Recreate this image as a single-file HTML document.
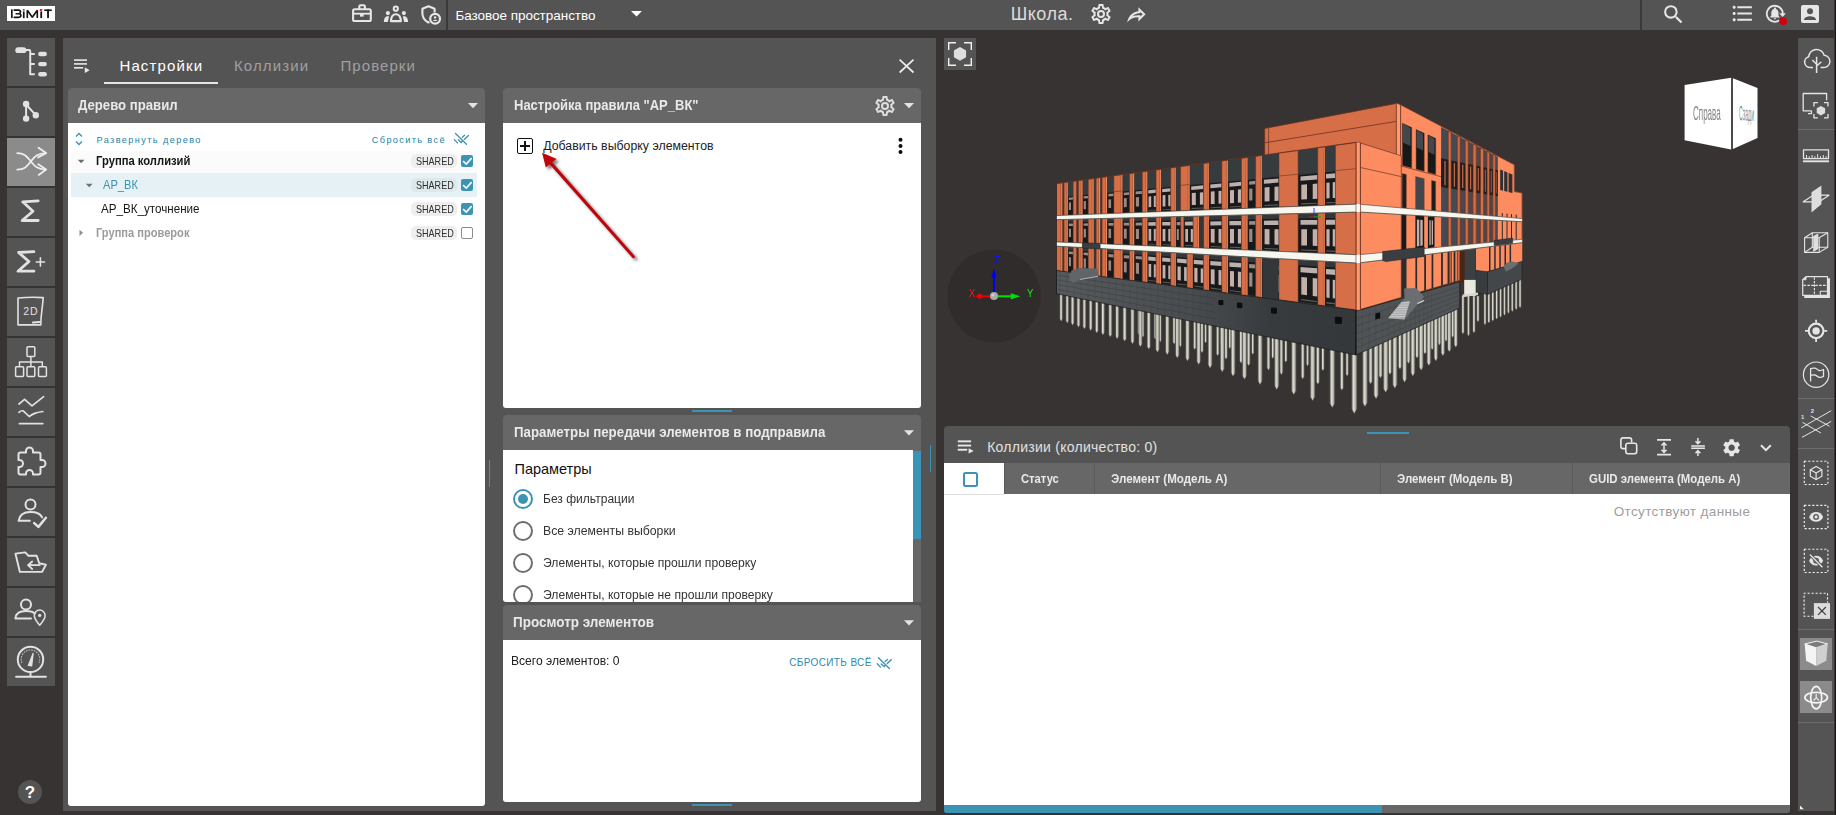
<!DOCTYPE html>
<html lang="ru">
<head>
<meta charset="utf-8">
<title>BIMIT</title>
<style>
*{box-sizing:border-box;margin:0;padding:0}
html,body{width:1836px;height:815px;overflow:hidden;background:#373332;font-family:"Liberation Sans",sans-serif;}
.a{position:absolute}
.t{position:absolute;white-space:nowrap;line-height:1}
svg{position:absolute;overflow:visible}
.sb{left:7px;width:48px;height:48px;background:#545454}
.sb.on{background:#8b8b8b}
.hd{background:#676767;border-radius:4px 4px 0 0}
.wh{background:#fff}
.teal{background:#3b94b4}
.badge{position:absolute;left:411px;width:46px;height:14px;border-radius:5px;background:#eeeeee}
.cb{position:absolute;left:461px;width:12px;height:12px;border-radius:2px;background:#3b94b4}
.rad{position:absolute;width:20px;height:20px;border-radius:50%;border:2px solid #6e6e6e;background:#fff}
</style>
</head>
<body>
<!-- TOP BAR -->
<div class="a" style="left:0;top:0;width:1834px;height:30px;background:#545454"></div>
<div class="a" style="left:7px;top:6px;width:48px;height:15px;background:#fff"></div>
<div class="a" style="left:446px;top:0;width:1.5px;height:30px;background:#3c3a39"></div>
<div class="a" style="left:1640px;top:0;width:1.5px;height:30px;background:#3c3a39"></div>
<!-- LEFT SIDEBAR -->
<div class="a sb" style="top:38px"></div>
<div class="a sb" style="top:88px"></div>
<div class="a sb on" style="top:138px"></div>
<div class="a sb" style="top:188px"></div>
<div class="a sb" style="top:238px"></div>
<div class="a sb" style="top:288px"></div>
<div class="a sb" style="top:338px"></div>
<div class="a sb" style="top:388px"></div>
<div class="a sb" style="top:438px"></div>
<div class="a sb" style="top:488px"></div>
<div class="a sb" style="top:538px"></div>
<div class="a sb" style="top:588px"></div>
<div class="a sb" style="top:638px"></div>
<div class="a" style="left:18px;top:780px;width:24px;height:24px;border-radius:50%;background:#545454"></div>
<!-- MAIN PANEL -->
<div class="a" style="left:63px;top:38px;width:873px;height:773px;background:#545454"></div>
<div class="a" style="left:104px;top:82px;width:114px;height:2px;background:#e6e6e6"></div>
<!-- tree panel -->
<div class="a hd" style="left:68px;top:88px;width:417px;height:35px"></div>
<div class="a wh" style="left:68px;top:123px;width:417px;height:683px;border-radius:0 0 3px 3px"></div>
<div class="a" style="left:71px;top:151px;width:406px;height:22px;background:#fbfbfb"></div>
<div class="a" style="left:71px;top:173px;width:406px;height:24px;background:#e6f1f5"></div>
<div class="badge" style="top:154px"></div>
<div class="badge" style="top:178px;background:#dde8ec"></div>
<div class="badge" style="top:202px"></div>
<div class="badge" style="top:226px"></div>
<div class="cb" style="top:155px"></div>
<div class="cb" style="top:179px"></div>
<div class="cb" style="top:203px"></div>
<div class="cb" style="top:227px;background:#fff;border:1.5px solid #8c8c8c"></div>
<!-- rule settings panel -->
<div class="a hd" style="left:503px;top:88px;width:418px;height:35px"></div>
<div class="a wh" style="left:503px;top:123px;width:418px;height:285px;border-radius:0 0 3px 3px"></div>
<div class="a teal" style="left:692px;top:410px;width:40px;height:2px"></div>
<div class="a" style="left:517px;top:138px;width:16px;height:16px;border:1.5px solid #111;border-radius:2px"></div>
<div class="a" style="left:520px;top:145.25px;width:10px;height:1.5px;background:#111"></div>
<div class="a" style="left:524.25px;top:141px;width:1.5px;height:10px;background:#111"></div>
<!-- params panel -->
<div class="a hd" style="left:503px;top:415px;width:418px;height:35px"></div>
<div class="a wh" style="left:503px;top:450px;width:418px;height:152px;border-radius:0 0 3px 3px"></div>
<div class="a" style="left:913px;top:450px;width:8px;height:152px;background:#676767"></div>
<div class="a teal" style="left:913px;top:451px;width:8px;height:88px"></div>
<div class="a teal" style="left:488.5px;top:460px;width:1.5px;height:27px"></div>
<div class="a teal" style="left:929.5px;top:445px;width:1.5px;height:27px"></div>
<div class="rad" style="left:513.3px;top:488.8px;border-color:#3b94b4"></div>
<div class="a" style="left:518.3px;top:493.8px;width:10px;height:10px;border-radius:50%;background:#3b94b4"></div>
<div class="rad" style="left:513.3px;top:520.7px"></div>
<div class="rad" style="left:513.3px;top:552.6px"></div>
<div class="rad" style="left:513.3px;top:584.5px"></div>
<div class="t" style="left:543.00px;top:589.00px;font-size:12.5px;color:#333333;transform:scaleX(0.9703);transform-origin:0 0">Элементы, которые не прошли проверку</div>
<div class="a" style="left:500px;top:602px;width:430px;height:3px;background:#545454"></div>
<!-- preview panel -->
<div class="a hd" style="left:503px;top:605px;width:418px;height:35px"></div>
<div class="a wh" style="left:503px;top:640px;width:418px;height:162px;border-radius:0 0 3px 3px"></div>
<div class="a teal" style="left:692px;top:804px;width:40px;height:2px"></div>
<!-- VIEWPORT button -->
<div class="a" style="left:944px;top:38px;width:32px;height:32px;background:#545454"></div>
<!-- BOTTOM PANEL -->
<div class="a" style="left:944px;top:426px;width:846px;height:387px;background:#545454;border-radius:4px 4px 3px 3px"></div>
<div class="a teal" style="left:1367px;top:432px;width:42px;height:2px"></div>
<div class="a" style="left:944px;top:463px;width:846px;height:31px;background:#676767"></div>
<div class="a wh" style="left:944px;top:463px;width:60px;height:31px"></div>
<div class="a" style="left:1004px;top:463px;width:1px;height:31px;background:#5a5a5a"></div>
<div class="a" style="left:1094px;top:463px;width:1px;height:31px;background:#5a5a5a"></div>
<div class="a" style="left:1380px;top:463px;width:1px;height:31px;background:#5a5a5a"></div>
<div class="a" style="left:1572px;top:463px;width:1px;height:31px;background:#5a5a5a"></div>
<div class="a wh" style="left:944px;top:494px;width:846px;height:311px"></div>
<div class="a" style="left:944px;top:494px;width:60px;height:1px;background:#e0e0e0"></div>
<div class="a" style="left:962.5px;top:471.5px;width:15px;height:15px;border:2px solid #3b94b4;border-radius:2.5px;background:#fff"></div>
<div class="a" style="left:944px;top:805px;width:846px;height:8px;background:#676767;border-radius:0 0 3px 3px"></div>
<div class="a teal" style="left:944px;top:805px;width:438px;height:8px;border-radius:0 0 0 3px"></div>
<!-- RIGHT TOOLBAR -->
<div class="a" style="left:1834.500px;top:0;width:1.500px;height:815px;background:#1a1817"></div>
<div class="a" style="left:1798px;top:38px;width:36px;height:773px;background:#545454"></div>
<div class="a" style="left:1798px;top:129px;width:36px;height:1px;background:#6e6e6e"></div>
<div class="a" style="left:1798px;top:398px;width:36px;height:1px;background:#6e6e6e"></div>
<div class="a" style="left:1798px;top:448px;width:36px;height:1px;background:#6e6e6e"></div>
<div class="a" style="left:1798px;top:629px;width:36px;height:1px;background:#6e6e6e"></div>
<div class="a" style="left:1798px;top:722px;width:36px;height:1px;background:#6e6e6e"></div>
<div class="a" style="left:1800px;top:638px;width:32px;height:32px;background:#8b8b8b"></div>
<div class="a" style="left:1800px;top:681px;width:32px;height:32px;background:#8b8b8b"></div>

<!-- TEXT -->
<div class="t" style="left:455.40px;top:9.00px;font-size:13.5px;color:#ffffff;letter-spacing:-0.033px">Базовое пространство</div>
<div class="t" style="left:1010.80px;top:5.00px;font-size:18px;color:#dcdcdc;letter-spacing:0.479px">Школа.</div>
<div class="t" style="left:119.40px;top:58.00px;font-size:15px;color:#ffffff;letter-spacing:1.154px">Настройки</div>
<div class="t" style="left:233.90px;top:58.00px;font-size:15px;color:#a0a0a0;letter-spacing:1.130px">Коллизии</div>
<div class="t" style="left:340.50px;top:58.00px;font-size:15px;color:#a0a0a0;letter-spacing:1.070px">Проверки</div>
<div class="t" style="left:78.20px;top:98.00px;font-size:14.3px;color:#e9e9e9;transform:scaleX(0.9196);transform-origin:0 0;font-weight:bold">Дерево правил</div>
<div class="t" style="left:96.50px;top:136.00px;font-size:9.2px;color:#2482a5;letter-spacing:1.380px">Развернуть дерево</div>
<div class="t" style="left:371.80px;top:136.00px;font-size:9.2px;color:#2482a5;letter-spacing:1.349px">Сбросить всё</div>
<div class="t" style="left:95.50px;top:155.00px;font-size:12.3px;color:#151515;transform:scaleX(0.9130);transform-origin:0 0;font-weight:bold">Группа коллизий</div>
<div class="t" style="left:103.30px;top:179.00px;font-size:12.3px;color:#3b94b4;transform:scaleX(0.9025);transform-origin:0 0">АР_ВК</div>
<div class="t" style="left:101.30px;top:203.00px;font-size:12.3px;color:#151515;transform:scaleX(0.9458);transform-origin:0 0">АР_ВК_уточнение</div>
<div class="t" style="left:95.50px;top:227.00px;font-size:12.3px;color:#9b9b9b;transform:scaleX(0.9013);transform-origin:0 0;font-weight:bold">Группа проверок</div>
<div class="t" style="left:513.50px;top:98.00px;font-size:14.3px;color:#e9e9e9;transform:scaleX(0.9094);transform-origin:0 0;font-weight:bold">Настройка правила &quot;АР_ВК&quot;</div>
<div class="t" style="left:543.20px;top:140.00px;font-size:12.3px;color:#222222;letter-spacing:0.017px">Добавить выборку элементов</div>
<div class="t" style="left:513.50px;top:425.00px;font-size:14.3px;color:#e9e9e9;transform:scaleX(0.9299);transform-origin:0 0;font-weight:bold">Параметры передачи элементов в подправила</div>
<div class="t" style="left:514.50px;top:462.00px;font-size:14.5px;color:#111111;letter-spacing:-0.009px">Параметры</div>
<div class="t" style="left:542.74px;top:493.00px;font-size:12.5px;color:#333333;transform:scaleX(0.9633);transform-origin:0 0">Без фильтрации</div>
<div class="t" style="left:542.72px;top:525.00px;font-size:12.5px;color:#333333;transform:scaleX(0.9817);transform-origin:0 0">Все элементы выборки</div>
<div class="t" style="left:543.00px;top:557.00px;font-size:12.5px;color:#333333;transform:scaleX(0.9717);transform-origin:0 0">Элементы, которые прошли проверку</div>
<div class="t" style="left:513.30px;top:615.00px;font-size:14.3px;color:#e9e9e9;transform:scaleX(0.9427);transform-origin:0 0;font-weight:bold">Просмотр элементов</div>
<div class="t" style="left:510.72px;top:655.00px;font-size:12.3px;color:#222222;transform:scaleX(0.9839);transform-origin:0 0">Всего элементов: 0</div>
<div class="t" style="left:789.20px;top:658.00px;font-size:10px;color:#2f8aab;letter-spacing:0.370px">СБРОСИТЬ ВСЁ</div>
<div class="t" style="left:987.20px;top:440.00px;font-size:14px;color:#e0e0e0;letter-spacing:0.266px">Коллизии (количество: 0)</div>
<div class="t" style="left:1021.10px;top:473.00px;font-size:12.3px;color:#e9e9e9;transform:scaleX(0.9134);transform-origin:0 0;font-weight:bold">Статус</div>
<div class="t" style="left:1110.50px;top:473.00px;font-size:12.3px;color:#e9e9e9;transform:scaleX(0.9412);transform-origin:0 0;font-weight:bold">Элемент (Модель A)</div>
<div class="t" style="left:1396.60px;top:473.00px;font-size:12.3px;color:#e9e9e9;transform:scaleX(0.9347);transform-origin:0 0;font-weight:bold">Элемент (Модель B)</div>
<div class="t" style="left:1588.80px;top:473.00px;font-size:12.3px;color:#e9e9e9;transform:scaleX(0.9298);transform-origin:0 0;font-weight:bold">GUID элемента (Модель A)</div>
<div class="t" style="left:1613.70px;top:505.00px;font-size:13.5px;color:#9e9e9e;letter-spacing:0.372px">Отсутствуют данные</div>
<div class="t" style="left:415.70px;top:157.00px;font-size:10.4px;color:#2e2e2e;transform:scaleX(0.8715);transform-origin:0 0">SHARED</div>
<div class="t" style="left:415.70px;top:181.00px;font-size:10.4px;color:#2e2e2e;transform:scaleX(0.8715);transform-origin:0 0">SHARED</div>
<div class="t" style="left:415.70px;top:205.00px;font-size:10.4px;color:#2e2e2e;transform:scaleX(0.8715);transform-origin:0 0">SHARED</div>
<div class="t" style="left:415.70px;top:229.00px;font-size:10.4px;color:#2e2e2e;transform:scaleX(0.8715);transform-origin:0 0">SHARED</div>
<!-- BUILDING -->
<svg width="1836" height="815" viewBox="0 0 1836 815" style="left:0;top:0"><defs><linearGradient id="pg" x1="0" x2="1" y1="0" y2="0"><stop offset="0" stop-color="#6d6d66"/><stop offset="0.35" stop-color="#dcdcd2"/><stop offset="0.7" stop-color="#b9b9af"/><stop offset="1" stop-color="#62625c"/></linearGradient></defs>
<path d="M1204.4,322.0V341.2L1205.6,343.0L1206.8,341.2V322.0Z" fill="url(#pg)" stroke="#4e4e49" stroke-width="0.35"/>
<path d="M1220.1,325.2V343.8L1221.3,345.7L1222.5,343.8V325.2Z" fill="url(#pg)" stroke="#4e4e49" stroke-width="0.35"/>
<path d="M1228.7,327.0V346.8L1229.9,348.7L1231.1,346.8V327.0Z" fill="url(#pg)" stroke="#4e4e49" stroke-width="0.35"/>
<path d="M1243.8,330.0V350.3L1245.0,352.3L1246.3,350.3V330.0Z" fill="url(#pg)" stroke="#4e4e49" stroke-width="0.35"/>
<path d="M1251.5,331.6V352.4L1252.8,354.4L1254.0,352.4V331.6Z" fill="url(#pg)" stroke="#4e4e49" stroke-width="0.35"/>
<path d="M1271.5,335.7V356.5L1272.8,358.5L1274.1,356.5V335.7Z" fill="url(#pg)" stroke="#4e4e49" stroke-width="0.35"/>
<path d="M1284.6,338.4V360.2L1285.9,362.3L1287.2,360.2V338.4Z" fill="url(#pg)" stroke="#4e4e49" stroke-width="0.35"/>
<path d="M1306.2,342.7V363.9L1307.5,366.1L1308.9,363.9V342.7Z" fill="url(#pg)" stroke="#4e4e49" stroke-width="0.35"/>
<path d="M1321.5,345.9V368.6L1322.9,370.8L1324.3,368.6V345.9Z" fill="url(#pg)" stroke="#4e4e49" stroke-width="0.35"/>
<path d="M1345.8,350.8V373.9L1347.2,376.1L1348.6,373.9V350.8Z" fill="url(#pg)" stroke="#4e4e49" stroke-width="0.35"/>
<path d="M1137.5,308.5V332.8L1138.8,334.8L1140.1,332.8V308.5Z" fill="url(#pg)" stroke="#4e4e49" stroke-width="0.35"/>
<path d="M1141.5,309.3V335.3L1142.8,337.4L1144.1,335.3V309.3Z" fill="url(#pg)" stroke="#4e4e49" stroke-width="0.35"/>
<path d="M1154.0,311.8V337.4L1155.3,339.5L1156.7,337.4V311.8Z" fill="url(#pg)" stroke="#4e4e49" stroke-width="0.35"/>
<path d="M1158.9,312.8V340.1L1160.2,342.2L1161.5,340.1V312.8Z" fill="url(#pg)" stroke="#4e4e49" stroke-width="0.35"/>
<path d="M1172.8,315.6V342.1L1174.2,344.2L1175.5,342.1V315.6Z" fill="url(#pg)" stroke="#4e4e49" stroke-width="0.35"/>
<path d="M1178.9,316.9V344.9L1180.3,347.1L1181.7,344.9V316.9Z" fill="url(#pg)" stroke="#4e4e49" stroke-width="0.35"/>
<path d="M1193.3,319.8V347.4L1194.7,349.6L1196.1,347.4V319.8Z" fill="url(#pg)" stroke="#4e4e49" stroke-width="0.35"/>
<path d="M1200.6,321.3V350.5L1202.1,352.8L1203.5,350.5V321.3Z" fill="url(#pg)" stroke="#4e4e49" stroke-width="0.35"/>
<path d="M1216.2,324.5V353.5L1217.7,355.8L1219.1,353.5V324.5Z" fill="url(#pg)" stroke="#4e4e49" stroke-width="0.35"/>
<path d="M1224.6,326.2V356.9L1226.1,359.2L1227.6,356.9V326.2Z" fill="url(#pg)" stroke="#4e4e49" stroke-width="0.35"/>
<path d="M1239.5,329.2V360.8L1241.1,363.2L1242.6,360.8V329.2Z" fill="url(#pg)" stroke="#4e4e49" stroke-width="0.35"/>
<path d="M1247.1,330.8V363.2L1248.6,365.7L1250.2,363.2V330.8Z" fill="url(#pg)" stroke="#4e4e49" stroke-width="0.35"/>
<path d="M1266.9,334.8V367.8L1268.5,370.3L1270.1,367.8V334.8Z" fill="url(#pg)" stroke="#4e4e49" stroke-width="0.35"/>
<path d="M1279.8,337.4V372.1L1281.4,374.7L1283.0,372.1V337.4Z" fill="url(#pg)" stroke="#4e4e49" stroke-width="0.35"/>
<path d="M1301.1,341.8V376.4L1302.8,379.0L1304.4,376.4V341.8Z" fill="url(#pg)" stroke="#4e4e49" stroke-width="0.35"/>
<path d="M1316.2,344.8V381.6L1317.9,384.3L1319.6,381.6V344.8Z" fill="url(#pg)" stroke="#4e4e49" stroke-width="0.35"/>
<path d="M1340.2,349.7V387.6L1341.9,390.3L1343.6,387.6V349.7Z" fill="url(#pg)" stroke="#4e4e49" stroke-width="0.35"/>
<path d="M1059.7,292.7V318.9L1061.2,321.3L1062.7,318.9V292.7Z" fill="url(#pg)" stroke="#4e4e49" stroke-width="0.35"/>
<path d="M1065.8,293.9V320.7L1067.3,323.2L1068.8,320.7V293.9Z" fill="url(#pg)" stroke="#4e4e49" stroke-width="0.35"/>
<path d="M1071.0,295.0V322.7L1072.6,325.2L1074.2,322.7V295.0Z" fill="url(#pg)" stroke="#4e4e49" stroke-width="0.35"/>
<path d="M1076.9,296.2V324.7L1078.5,327.2L1080.1,324.7V296.2Z" fill="url(#pg)" stroke="#4e4e49" stroke-width="0.35"/>
<path d="M1082.8,297.4V326.5L1084.4,329.1L1086.0,326.5V297.4Z" fill="url(#pg)" stroke="#4e4e49" stroke-width="0.35"/>
<path d="M1089.1,298.7V328.1L1090.7,330.7L1092.3,328.1V298.7Z" fill="url(#pg)" stroke="#4e4e49" stroke-width="0.35"/>
<path d="M1095.2,299.9V330.4L1096.8,333.0L1098.4,330.4V299.9Z" fill="url(#pg)" stroke="#4e4e49" stroke-width="0.35"/>
<path d="M1101.3,301.2V332.3L1103.0,335.0L1104.7,332.3V301.2Z" fill="url(#pg)" stroke="#4e4e49" stroke-width="0.35"/>
<path d="M1108.6,302.7V334.3L1110.3,337.0L1112.0,334.3V302.7Z" fill="url(#pg)" stroke="#4e4e49" stroke-width="0.35"/>
<path d="M1115.5,304.1V336.1L1117.2,338.9L1118.9,336.1V304.1Z" fill="url(#pg)" stroke="#4e4e49" stroke-width="0.35"/>
<path d="M1122.9,305.6V338.5L1124.7,341.3L1126.5,338.5V305.6Z" fill="url(#pg)" stroke="#4e4e49" stroke-width="0.35"/>
<path d="M1130.7,307.2V341.1L1132.5,343.9L1134.3,341.1V307.2Z" fill="url(#pg)" stroke="#4e4e49" stroke-width="0.35"/>
<path d="M1138.6,308.8V343.9L1140.4,346.8L1142.2,343.9V308.8Z" fill="url(#pg)" stroke="#4e4e49" stroke-width="0.35"/>
<path d="M1147.0,310.5V346.3L1148.8,349.2L1150.6,346.3V310.5Z" fill="url(#pg)" stroke="#4e4e49" stroke-width="0.35"/>
<path d="M1155.6,312.3V349.3L1157.5,352.3L1159.4,349.3V312.3Z" fill="url(#pg)" stroke="#4e4e49" stroke-width="0.35"/>
<path d="M1165.4,314.2V351.6L1167.3,354.7L1169.2,351.6V314.2Z" fill="url(#pg)" stroke="#4e4e49" stroke-width="0.35"/>
<path d="M1175.4,316.3V354.9L1177.3,358.0L1179.2,354.9V316.3Z" fill="url(#pg)" stroke="#4e4e49" stroke-width="0.35"/>
<path d="M1185.5,318.4V357.7L1187.5,360.9L1189.5,357.7V318.4Z" fill="url(#pg)" stroke="#4e4e49" stroke-width="0.35"/>
<path d="M1196.7,320.6V361.3L1198.7,364.5L1200.7,361.3V320.6Z" fill="url(#pg)" stroke="#4e4e49" stroke-width="0.35"/>
<path d="M1208.0,322.9V364.7L1210.1,368.0L1212.2,364.7V322.9Z" fill="url(#pg)" stroke="#4e4e49" stroke-width="0.35"/>
<path d="M1220.2,325.4V368.5L1222.3,371.9L1224.4,368.5V325.4Z" fill="url(#pg)" stroke="#4e4e49" stroke-width="0.35"/>
<path d="M1231.0,327.6V372.9L1233.1,376.3L1235.2,372.9V327.6Z" fill="url(#pg)" stroke="#4e4e49" stroke-width="0.35"/>
<path d="M1242.3,329.9V375.7L1244.5,379.2L1246.7,375.7V329.9Z" fill="url(#pg)" stroke="#4e4e49" stroke-width="0.35"/>
<path d="M1257.9,333.1V380.9L1260.1,384.5L1262.3,380.9V333.1Z" fill="url(#pg)" stroke="#4e4e49" stroke-width="0.35"/>
<path d="M1274.4,336.5V385.8L1276.7,389.5L1279.0,385.8V336.5Z" fill="url(#pg)" stroke="#4e4e49" stroke-width="0.35"/>
<path d="M1291.4,340.0V390.7L1293.8,394.5L1296.2,390.7V340.0Z" fill="url(#pg)" stroke="#4e4e49" stroke-width="0.35"/>
<path d="M1310.2,343.8V396.7L1312.6,400.6L1315.0,396.7V343.8Z" fill="url(#pg)" stroke="#4e4e49" stroke-width="0.35"/>
<path d="M1329.8,347.8V403.4L1332.3,407.4L1334.8,403.4V347.8Z" fill="url(#pg)" stroke="#4e4e49" stroke-width="0.35"/>
<path d="M1368.8,347.2V381.0L1370.6,383.9L1372.5,381.0V347.2Z" fill="url(#pg)" stroke="#4e4e49" stroke-width="0.35"/>
<path d="M1378.8,342.7V375.3L1380.5,378.1L1382.3,375.3V342.7Z" fill="url(#pg)" stroke="#4e4e49" stroke-width="0.35"/>
<path d="M1388.3,338.4V371.8L1390.0,374.6L1391.7,371.8V338.4Z" fill="url(#pg)" stroke="#4e4e49" stroke-width="0.35"/>
<path d="M1398.3,333.8V366.5L1400.0,369.2L1401.7,366.5V333.8Z" fill="url(#pg)" stroke="#4e4e49" stroke-width="0.35"/>
<path d="M1406.9,329.9V361.0L1408.5,363.6L1410.2,361.0V329.9Z" fill="url(#pg)" stroke="#4e4e49" stroke-width="0.35"/>
<path d="M1415.5,326.0V355.7L1417.1,358.2L1418.7,355.7V326.0Z" fill="url(#pg)" stroke="#4e4e49" stroke-width="0.35"/>
<path d="M1423.5,322.4V351.7L1425.0,354.1L1426.6,351.7V322.4Z" fill="url(#pg)" stroke="#4e4e49" stroke-width="0.35"/>
<path d="M1430.7,319.1V347.6L1432.2,350.0L1433.7,347.6V319.1Z" fill="url(#pg)" stroke="#4e4e49" stroke-width="0.35"/>
<path d="M1438.0,315.8V342.9L1439.4,345.2L1440.9,342.9V315.8Z" fill="url(#pg)" stroke="#4e4e49" stroke-width="0.35"/>
<path d="M1444.6,312.8V339.3L1446.0,341.6L1447.5,339.3V312.8Z" fill="url(#pg)" stroke="#4e4e49" stroke-width="0.35"/>
<path d="M1451.3,309.8V335.2L1452.7,337.5L1454.1,335.2V309.8Z" fill="url(#pg)" stroke="#4e4e49" stroke-width="0.35"/>
<path d="M1362.5,349.8V402.5L1365.0,406.6L1367.5,402.5V349.8Z" fill="url(#pg)" stroke="#4e4e49" stroke-width="0.35"/>
<path d="M1373.7,344.7V394.8L1376.1,398.7L1378.5,394.8V344.7Z" fill="url(#pg)" stroke="#4e4e49" stroke-width="0.35"/>
<path d="M1383.3,340.4V388.5L1385.7,392.3L1388.1,388.5V340.4Z" fill="url(#pg)" stroke="#4e4e49" stroke-width="0.35"/>
<path d="M1392.6,336.2V384.5L1394.9,388.2L1397.2,384.5V336.2Z" fill="url(#pg)" stroke="#4e4e49" stroke-width="0.35"/>
<path d="M1402.4,331.7V378.7L1404.6,382.2L1406.8,378.7V331.7Z" fill="url(#pg)" stroke="#4e4e49" stroke-width="0.35"/>
<path d="M1410.8,327.9V372.7L1412.9,376.1L1415.0,372.7V327.9Z" fill="url(#pg)" stroke="#4e4e49" stroke-width="0.35"/>
<path d="M1419.1,324.2V366.9L1421.2,370.2L1423.3,366.9V324.2Z" fill="url(#pg)" stroke="#4e4e49" stroke-width="0.35"/>
<path d="M1426.9,320.6V362.4L1428.9,365.6L1430.9,362.4V320.6Z" fill="url(#pg)" stroke="#4e4e49" stroke-width="0.35"/>
<path d="M1434.0,317.5V357.9L1435.9,361.0L1437.8,357.9V317.5Z" fill="url(#pg)" stroke="#4e4e49" stroke-width="0.35"/>
<path d="M1441.0,314.3V352.8L1442.9,355.8L1444.8,352.8V314.3Z" fill="url(#pg)" stroke="#4e4e49" stroke-width="0.35"/>
<path d="M1447.5,311.3V348.9L1449.3,351.8L1451.1,348.9V311.3Z" fill="url(#pg)" stroke="#4e4e49" stroke-width="0.35"/>
<path d="M1454.0,308.4V344.4L1455.8,347.2L1457.6,344.4V308.4Z" fill="url(#pg)" stroke="#4e4e49" stroke-width="0.35"/>
<path d="M1461.7,296.0V331.9L1463.0,334.0L1464.3,331.9V296.0Z" fill="url(#pg)" stroke="#4e4e49" stroke-width="0.35"/>
<path d="M1467.2,296.0V333.9L1468.5,336.0L1469.8,333.9V296.0Z" fill="url(#pg)" stroke="#4e4e49" stroke-width="0.35"/>
<path d="M1472.7,296.0V330.9L1474.0,333.0L1475.3,330.9V296.0Z" fill="url(#pg)" stroke="#4e4e49" stroke-width="0.35"/>
<path d="M1476.7,296.0V319.9L1478.0,322.0L1479.3,319.9V296.0Z" fill="url(#pg)" stroke="#4e4e49" stroke-width="0.35"/>
<path d="M1483.8,286.7V323.1L1485.0,325.0L1486.2,323.1V286.7Z" fill="url(#pg)" stroke="#4e4e49" stroke-width="0.35"/>
<path d="M1487.7,285.1V321.2L1488.9,323.1L1490.1,321.2V285.1Z" fill="url(#pg)" stroke="#4e4e49" stroke-width="0.35"/>
<path d="M1491.6,283.6V319.3L1492.8,321.2L1494.0,319.3V283.6Z" fill="url(#pg)" stroke="#4e4e49" stroke-width="0.35"/>
<path d="M1495.5,282.0V317.4L1496.7,319.3L1497.9,317.4V282.0Z" fill="url(#pg)" stroke="#4e4e49" stroke-width="0.35"/>
<path d="M1499.4,280.4V315.5L1500.6,317.4L1501.8,315.5V280.4Z" fill="url(#pg)" stroke="#4e4e49" stroke-width="0.35"/>
<path d="M1503.3,278.8V313.6L1504.5,315.5L1505.7,313.6V278.8Z" fill="url(#pg)" stroke="#4e4e49" stroke-width="0.35"/>
<path d="M1507.2,277.2V311.7L1508.4,313.6L1509.6,311.7V277.2Z" fill="url(#pg)" stroke="#4e4e49" stroke-width="0.35"/>
<path d="M1511.1,275.6V309.8L1512.3,311.7L1513.5,309.8V275.6Z" fill="url(#pg)" stroke="#4e4e49" stroke-width="0.35"/>
<path d="M1515.0,274.0V307.9L1516.2,309.8L1517.4,307.9V274.0Z" fill="url(#pg)" stroke="#4e4e49" stroke-width="0.35"/>
<path d="M1518.9,272.4V306.0L1520.1,307.9L1521.3,306.0V272.4Z" fill="url(#pg)" stroke="#4e4e49" stroke-width="0.35"/>
<path d="M1351.6,354.0V409.1L1354.3,413.4L1357.0,409.1V354.0Z" fill="url(#pg)" stroke="#4e4e49" stroke-width="0.35"/>
<polygon points="1475.7,180.0 1497.8,157.5 1514.3,164.6 1514.3,191.6 1522.1,193.0 1522.1,262.0 1475.7,275.0" fill="#fd8c61"/>
<polygon points="1264.7,128.4 1396.4,103.4 1396.4,175.0 1264.7,160.0" fill="#d66e47" stroke="#6b3422" stroke-width="0.8"/>
<line x1="1264.7" y1="142.8" x2="1396.4" y2="121.4" stroke="#6b3422" stroke-width="0.8"/>
<line x1="1268.6" y1="127.6" x2="1268.6" y2="156.0" stroke="#6b3422" stroke-width="0.7"/>
<polygon points="1396.4,103.1 1400.6,104.7 1400.6,174.5 1396.4,173.5" fill="#ff9a70" stroke="#6b3422" stroke-width="0.6"/>
<polygon points="1400.6,104.7 1514.3,164.8 1514.3,191.6 1522.1,193.0 1522.1,261.4 1487.5,271.7 1475.7,270.3 1460.0,280.2 1400.6,297.7" fill="#fd8c61" stroke="#6b3422" stroke-width="0.7"/>
<polygon points="1360.4,143.0 1401.3,155.8 1401.3,297.4 1360.4,309.5" fill="#fd8c61" stroke="#6b3422" stroke-width="0.7"/>
<line x1="1360.4" y1="167.5" x2="1401.3" y2="176.6" stroke="#6b3422" stroke-width="0.7"/>
<polygon points="1441.1,127.1 1497.8,157.1 1497.8,245.7 1441.1,252.8" fill="#454a52"/>
<polygon points="1448.1,130.8 1451.4,132.6 1451.4,282.7 1448.1,283.7" fill="#ea8055" stroke="#6b3422" stroke-width="0.7"/>
<polygon points="1457.3,135.7 1460.3,137.3 1460.3,280.1 1457.3,280.9" fill="#ea8055" stroke="#6b3422" stroke-width="0.7"/>
<polygon points="1465.1,139.8 1468.4,141.5 1468.4,277.7 1465.1,278.6" fill="#ea8055" stroke="#6b3422" stroke-width="0.7"/>
<polygon points="1472.8,143.9 1476.5,145.8 1476.5,275.3 1472.8,276.4" fill="#ea8055" stroke="#6b3422" stroke-width="0.7"/>
<polygon points="1480.2,147.8 1483.8,149.7 1483.8,273.1 1480.2,274.2" fill="#ea8055" stroke="#6b3422" stroke-width="0.7"/>
<polygon points="1486.8,151.3 1489.7,152.8 1489.7,271.4 1486.8,272.3" fill="#ea8055" stroke="#6b3422" stroke-width="0.7"/>
<polygon points="1492.7,154.4 1495.6,155.9 1495.6,269.7 1492.7,270.5" fill="#ea8055" stroke="#6b3422" stroke-width="0.7"/>
<polygon points="1441.1,158.3 1497.8,170.2 1497.8,196.2 1441.1,187.1" fill="#1d1f22"/>
<line x1="1445.0" y1="161.1" x2="1445.0" y2="185.2" stroke="#c9714a" stroke-width="1.3" opacity="0.9"/>
<line x1="1454.4" y1="163.1" x2="1454.4" y2="186.7" stroke="#c9714a" stroke-width="1.3" opacity="0.9"/>
<line x1="1462.7" y1="164.8" x2="1462.7" y2="188.1" stroke="#c9714a" stroke-width="1.3" opacity="0.9"/>
<line x1="1470.6" y1="166.5" x2="1470.6" y2="189.3" stroke="#c9714a" stroke-width="1.3" opacity="0.9"/>
<line x1="1478.3" y1="168.1" x2="1478.3" y2="190.6" stroke="#c9714a" stroke-width="1.1047282368537252" opacity="0.9"/>
<line x1="1485.3" y1="169.6" x2="1485.3" y2="191.7" stroke="#c9714a" stroke-width="0.8837825894830075" opacity="0.9"/>
<line x1="1491.2" y1="170.8" x2="1491.2" y2="192.6" stroke="#c9714a" stroke-width="0.8837825894830075" opacity="0.9"/>
<line x1="1496.7" y1="172.0" x2="1496.7" y2="193.5" stroke="#c9714a" stroke-width="0.6628369421122215" opacity="0.9"/>
<polygon points="1448.4,131.0 1451.1,132.4 1451.1,282.8 1448.4,283.6" fill="#d26f46" stroke="#6b3422" stroke-width="0.6"/>
<polygon points="1457.6,135.9 1460.0,137.1 1460.0,280.2 1457.6,280.9" fill="#d26f46" stroke="#6b3422" stroke-width="0.6"/>
<polygon points="1465.4,140.0 1468.1,141.4 1468.1,277.8 1465.4,278.6" fill="#d26f46" stroke="#6b3422" stroke-width="0.6"/>
<polygon points="1473.1,144.0 1476.2,145.7 1476.2,275.4 1473.1,276.3" fill="#d26f46" stroke="#6b3422" stroke-width="0.6"/>
<polygon points="1480.5,147.9 1483.5,149.6 1483.5,273.2 1480.5,274.1" fill="#d26f46" stroke="#6b3422" stroke-width="0.6"/>
<polygon points="1487.1,151.4 1489.4,152.7 1489.4,271.5 1487.1,272.2" fill="#d26f46" stroke="#6b3422" stroke-width="0.6"/>
<polygon points="1493.0,154.5 1495.3,155.8 1495.3,269.7 1493.0,270.4" fill="#d26f46" stroke="#6b3422" stroke-width="0.6"/>
<polygon points="1500.2,169.5 1512.4,174.5 1512.4,193.0 1500.2,190.0" fill="#2c2f33"/>
<line x1="1503.6" y1="170.5" x2="1503.6" y2="192.0" stroke="#fd8c61" stroke-width="1.2"/>
<line x1="1508.0" y1="170.5" x2="1508.0" y2="192.0" stroke="#fd8c61" stroke-width="1.2"/>
<polygon points="1402.4,123.3 1411.7,127.5 1411.7,167.9 1402.4,165.4" fill="#161819" stroke="#6b3422" stroke-width="0.5"/>
<polygon points="1402.9,123.8 1410.5,128.0 1410.5,145.9 1402.9,142.4" fill="#43484f"/>
<polygon points="1416.1,129.5 1424.2,133.2 1424.2,171.3 1416.1,169.1" fill="#161819" stroke="#6b3422" stroke-width="0.5"/>
<polygon points="1416.6,130.0 1423.0,133.7 1423.0,150.5 1416.6,147.5" fill="#43484f"/>
<polygon points="1427.9,134.8 1435.7,138.4 1435.7,174.4 1427.9,172.3" fill="#161819" stroke="#6b3422" stroke-width="0.5"/>
<polygon points="1428.4,135.3 1434.5,138.9 1434.5,154.8 1428.4,151.9" fill="#43484f"/>
<line x1="1400.6" y1="165.9" x2="1441.1" y2="176.7" stroke="#6b3422" stroke-width="0.7"/>
<polygon points="1402.2,173.5 1406.3,174.4 1406.3,208.4 1402.2,208.0" fill="#1c1e20" stroke="#6b3422" stroke-width="0.4"/>
<polygon points="1415.6,176.6 1424.2,178.7 1424.2,210.0 1415.6,209.2" fill="#42474e" stroke="#6b3422" stroke-width="0.4"/>
<polygon points="1431.6,180.4 1435.6,181.4 1435.6,211.0 1431.6,210.6" fill="#1c1e20" stroke="#6b3422" stroke-width="0.4"/>
<polygon points="1401.6,214.6 1406.3,214.9 1406.3,250.2 1401.6,250.7" fill="#17191a"/>
<polygon points="1415.4,215.4 1424.2,216.0 1424.2,248.5 1415.4,249.4" fill="#17191a"/>
<polygon points="1416.9,219.4 1422.7,220.0 1422.7,245.5 1416.9,246.4" fill="#c4b0aa"/>
<line x1="1419.8" y1="219.4" x2="1419.8" y2="246.4" stroke="#17191a" stroke-width="1"/>
<polygon points="1427.9,216.2 1434.5,216.6 1434.5,247.6 1427.9,248.2" fill="#17191a"/>
<polygon points="1429.4,220.2 1433.0,220.6 1433.0,244.6 1429.4,245.2" fill="#c4b0aa"/>
<line x1="1431.2" y1="220.2" x2="1431.2" y2="245.2" stroke="#17191a" stroke-width="1"/>
<polygon points="1401.4,257.7 1406.5,257.1 1406.5,295.9 1401.4,297.4" fill="#2a2c2e"/>
<polygon points="1415.4,256.0 1417.1,255.7 1417.1,292.8 1415.4,293.3" fill="#2a2c2e"/>
<polygon points="1424.2,254.9 1426.0,254.6 1426.0,290.2 1424.2,290.7" fill="#2a2c2e"/>
<polygon points="1431.6,253.9 1433.3,253.7 1433.3,288.0 1431.6,288.5" fill="#2a2c2e"/>
<polygon points="1441.1,252.7 1442.9,252.5 1442.9,285.2 1441.1,285.7" fill="#2a2c2e"/>
<polygon points="1447.8,251.9 1449.5,251.7 1449.5,283.2 1447.8,283.8" fill="#2a2c2e"/>
<polygon points="1453.6,251.2 1455.4,251.0 1455.4,281.5 1453.6,282.0" fill="#2a2c2e"/>
<polygon points="1459.8,250.4 1478.0,248.2 1478.0,283.0 1459.8,283.0" fill="#4a2619"/>
<polygon points="1476.0,248.4 1522.1,242.7 1522.1,261.4 1487.5,271.7 1476.0,270.3" fill="#fd8c61"/>
<polygon points="1489.0,246.8 1490.5,246.6 1490.5,271.3 1489.0,271.3" fill="#2a2c2e"/>
<polygon points="1494.2,246.1 1495.7,246.0 1495.7,269.7 1494.2,269.7" fill="#2a2c2e"/>
<polygon points="1499.3,245.5 1500.8,245.3 1500.8,268.2 1499.3,268.2" fill="#2a2c2e"/>
<polygon points="1504.5,244.9 1506.0,244.7 1506.0,266.6 1504.5,266.6" fill="#2a2c2e"/>
<polygon points="1509.6,244.2 1511.1,244.0 1511.1,265.1 1509.6,265.1" fill="#2a2c2e"/>
<polygon points="1487.5,271.7 1522.1,261.4 1522.1,279.1 1487.5,294.6" fill="#43474a" stroke="#1b1b1b" stroke-width="0.6"/>
<polygon points="1475.7,270.3 1487.5,271.7 1487.5,294.6 1475.7,292.0" fill="#383c3e" stroke="#1b1b1b" stroke-width="0.4"/>
<polygon points="1503.7,266.8 1507.0,262.5 1513.0,261.5 1518.5,263.5 1512.0,268.5 1506.0,271.5" fill="#6b6e70"/>
<polygon points="1464.7,249.8 1475.7,248.4 1475.7,280.0 1464.7,280.0" fill="#3c4043"/>
<polygon points="1464.2,279.9 1475.7,279.9 1475.7,296.0 1464.2,296.0" fill="#e9e9e1"/>
<polygon points="1462.5,294.5 1478.0,292.5 1478.0,295.0 1462.5,297.3" fill="#d6d6cf"/>
<line x1="1502.3" y1="213.0" x2="1502.3" y2="216.9" stroke="#2a2c2e" stroke-width="1.0"/>
<line x1="1502.3" y1="220.6" x2="1502.3" y2="241.2" stroke="#2a2c2e" stroke-width="1.0"/>
<line x1="1507.0" y1="213.5" x2="1507.0" y2="217.3" stroke="#2a2c2e" stroke-width="1.0"/>
<line x1="1507.0" y1="220.9" x2="1507.0" y2="240.7" stroke="#2a2c2e" stroke-width="1.0"/>
<line x1="1511.5" y1="214.1" x2="1511.5" y2="217.7" stroke="#2a2c2e" stroke-width="1.0"/>
<line x1="1511.5" y1="221.2" x2="1511.5" y2="240.3" stroke="#2a2c2e" stroke-width="1.0"/>
<line x1="1516.2" y1="214.6" x2="1516.2" y2="218.1" stroke="#2a2c2e" stroke-width="1.0"/>
<line x1="1516.2" y1="221.5" x2="1516.2" y2="239.8" stroke="#2a2c2e" stroke-width="1.0"/>
<polygon points="1360.4,204.3 1522.1,218.6 1522.1,221.8 1360.4,212.1" fill="#f7f7ef"/>
<line x1="1360.4" y1="212.1" x2="1522.1" y2="221.8" stroke="#55554f" stroke-width="0.9"/>
<line x1="1360.4" y1="204.3" x2="1522.1" y2="218.6" stroke="#3a3a36" stroke-width="0.6"/>
<polygon points="1360.4,254.6 1522.1,239.3 1522.1,242.7 1360.4,262.8" fill="#f7f7ef"/>
<line x1="1360.4" y1="262.8" x2="1522.1" y2="242.7" stroke="#55554f" stroke-width="0.9"/>
<line x1="1360.4" y1="254.6" x2="1522.1" y2="239.3" stroke="#3a3a36" stroke-width="0.6"/>
<polygon points="1382.7,251.5 1424.2,247.0 1424.2,256.4 1386.0,261.6 1382.7,260.5" fill="#3a3e41" stroke="#1d1f20" stroke-width="0.5"/>
<polygon points="1494.2,240.4 1512.6,238.0 1512.6,243.2 1494.2,245.6" fill="#3a3e41" stroke="#1d1f20" stroke-width="0.5"/>
<polygon points="1356.0,311.2 1459.8,281.7 1459.8,307.9 1356.0,355.0" fill="#4f5355" stroke="#1b1b1b" stroke-width="0.7"/>
<line x1="1357.0" y1="318.5" x2="1459.0" y2="287.0" stroke="#3a3e40" stroke-width="0.5" opacity="0.9"/>
<line x1="1357.0" y1="325.8" x2="1459.0" y2="291.4" stroke="#3a3e40" stroke-width="0.5" opacity="0.9"/>
<line x1="1357.0" y1="333.1" x2="1459.0" y2="295.7" stroke="#3a3e40" stroke-width="0.5" opacity="0.9"/>
<line x1="1357.0" y1="340.4" x2="1459.0" y2="300.1" stroke="#3a3e40" stroke-width="0.5" opacity="0.9"/>
<line x1="1357.0" y1="347.7" x2="1459.0" y2="304.5" stroke="#3a3e40" stroke-width="0.5" opacity="0.9"/>
<line x1="1362.0" y1="311.0" x2="1362.0" y2="352.2" stroke="#3a3e40" stroke-width="0.4" opacity="0.7"/>
<line x1="1369.1" y1="308.9" x2="1369.1" y2="349.0" stroke="#3a3e40" stroke-width="0.4" opacity="0.7"/>
<line x1="1375.8" y1="306.9" x2="1375.8" y2="345.9" stroke="#3a3e40" stroke-width="0.4" opacity="0.7"/>
<line x1="1382.3" y1="305.0" x2="1382.3" y2="342.9" stroke="#3a3e40" stroke-width="0.4" opacity="0.7"/>
<line x1="1388.5" y1="303.2" x2="1388.5" y2="340.1" stroke="#3a3e40" stroke-width="0.4" opacity="0.7"/>
<line x1="1394.4" y1="301.5" x2="1394.4" y2="337.4" stroke="#3a3e40" stroke-width="0.4" opacity="0.7"/>
<line x1="1400.0" y1="299.8" x2="1400.0" y2="334.8" stroke="#3a3e40" stroke-width="0.4" opacity="0.7"/>
<line x1="1405.3" y1="298.3" x2="1405.3" y2="332.4" stroke="#3a3e40" stroke-width="0.4" opacity="0.7"/>
<line x1="1410.4" y1="296.8" x2="1410.4" y2="330.1" stroke="#3a3e40" stroke-width="0.4" opacity="0.7"/>
<line x1="1415.1" y1="295.4" x2="1415.1" y2="327.9" stroke="#3a3e40" stroke-width="0.4" opacity="0.7"/>
<line x1="1419.6" y1="294.1" x2="1419.6" y2="325.9" stroke="#3a3e40" stroke-width="0.4" opacity="0.7"/>
<line x1="1423.8" y1="292.8" x2="1423.8" y2="324.0" stroke="#3a3e40" stroke-width="0.4" opacity="0.7"/>
<line x1="1427.7" y1="291.7" x2="1427.7" y2="322.2" stroke="#3a3e40" stroke-width="0.4" opacity="0.7"/>
<line x1="1431.3" y1="290.6" x2="1431.3" y2="320.6" stroke="#3a3e40" stroke-width="0.4" opacity="0.7"/>
<polygon points="1388.0,318.2 1404.5,298.5 1404.0,288.5 1416.0,288.0 1424.2,296.8 1404.6,319.6" fill="#6b6e70"/>
<polygon points="1388.0,318.2 1401.5,302.0 1410.0,301.0 1404.6,319.6" fill="#a9aaac"/>
<line x1="1400.8" y1="303.0" x2="1409.5" y2="302.7" stroke="#d8d8d8" stroke-width="0.7"/>
<line x1="1398.9" y1="305.3" x2="1408.8" y2="305.0" stroke="#d8d8d8" stroke-width="0.7"/>
<line x1="1397.0" y1="307.6" x2="1408.0" y2="307.3" stroke="#d8d8d8" stroke-width="0.7"/>
<line x1="1395.1" y1="309.9" x2="1407.2" y2="309.6" stroke="#d8d8d8" stroke-width="0.7"/>
<line x1="1393.2" y1="312.2" x2="1406.5" y2="311.9" stroke="#d8d8d8" stroke-width="0.7"/>
<line x1="1391.3" y1="314.5" x2="1405.8" y2="314.2" stroke="#d8d8d8" stroke-width="0.7"/>
<line x1="1389.4" y1="316.8" x2="1405.0" y2="316.5" stroke="#d8d8d8" stroke-width="0.7"/>
<line x1="1417.5" y1="303.5" x2="1424.0" y2="300.5" stroke="#e4e4e4" stroke-width="1.2"/>
<polygon points="1375.3,313.6 1380.2,312.3 1380.2,318.2 1375.3,319.4" fill="#0d0d0d"/>
<polygon points="1356.0,142.0 1360.4,142.3 1360.4,310.2 1356.0,310.2" fill="#ff9a70" stroke="#6b3422" stroke-width="0.6"/>
<polygon points="1056.5,183.6 1356.0,142.3 1356.0,310.2 1056.5,270.5" fill="#33373a"/>
<polygon points="1062.2,183.1 1064.1,182.9 1064.1,196.5 1062.2,196.7" fill="#363b3e"/>
<polygon points="1067.7,182.4 1073.2,181.6 1073.2,195.6 1067.7,196.1" fill="#363b3e"/>
<polygon points="1067.7,196.7 1073.2,196.2 1073.2,214.7 1067.7,214.9" fill="#17191a"/>
<polygon points="1068.8,197.7 1073.0,197.3 1073.0,199.5 1068.8,199.9" fill="#b0a09b" opacity="0.85"/>
<polygon points="1068.9,202.4 1071.0,202.3 1071.0,210.0 1068.9,210.1" fill="#ab948d" opacity="0.9"/>
<polygon points="1076.5,181.2 1078.5,180.9 1078.5,195.1 1076.5,195.3" fill="#363b3e"/>
<polygon points="1082.4,180.4 1088.3,179.6 1088.3,194.2 1082.4,194.7" fill="#363b3e"/>
<polygon points="1082.4,195.3 1088.3,194.7 1088.3,214.1 1082.4,214.4" fill="#17191a"/>
<polygon points="1083.6,196.3 1088.1,195.9 1088.1,198.3 1083.6,198.6" fill="#b0a09b" opacity="0.85"/>
<polygon points="1083.7,201.3 1085.9,201.1 1085.9,209.2 1083.7,209.3" fill="#ab948d" opacity="0.9"/>
<polygon points="1093.6,178.8 1096.2,178.5 1096.2,193.4 1093.6,193.7" fill="#363b3e"/>
<polygon points="1100.1,178.0 1102.1,177.7 1102.1,192.9 1100.1,193.1" fill="#363b3e"/>
<polygon points="1107.0,177.0 1113.9,176.1 1113.9,191.7 1107.0,192.4" fill="#363b3e"/>
<polygon points="1107.0,193.0 1113.9,192.3 1113.9,213.1 1107.0,213.4" fill="#17191a"/>
<polygon points="1108.4,194.1 1113.6,193.6 1113.6,196.1 1108.4,196.6" fill="#b0a09b" opacity="0.85"/>
<polygon points="1108.5,199.4 1111.1,199.2 1111.1,207.9 1108.5,208.0" fill="#ab948d" opacity="0.9"/>
<polygon points="1122.3,174.9 1129.6,173.9 1129.6,190.2 1122.3,190.9" fill="#363b3e"/>
<polygon points="1122.3,191.6 1129.6,190.9 1129.6,212.5 1122.3,212.8" fill="#17191a"/>
<polygon points="1123.8,192.7 1129.3,192.2 1129.3,194.8 1123.8,195.3" fill="#b0a09b" opacity="0.85"/>
<polygon points="1123.9,198.2 1126.7,198.0 1126.7,207.0 1123.9,207.2" fill="#ab948d" opacity="0.9"/>
<polygon points="1134.1,173.3 1142.3,172.2 1142.3,189.0 1134.1,189.8" fill="#363b3e"/>
<polygon points="1134.1,190.5 1142.3,189.7 1142.3,212.0 1134.1,212.3" fill="#17191a"/>
<polygon points="1135.7,191.6 1142.0,191.1 1142.0,193.7 1135.7,194.3" fill="#b0a09b" opacity="0.85"/>
<polygon points="1135.9,197.3 1139.0,197.1 1139.0,206.4 1135.9,206.6" fill="#ab948d" opacity="0.9"/>
<polygon points="1147.2,171.5 1156.1,170.3 1156.1,187.7 1147.2,188.6" fill="#363b3e"/>
<polygon points="1147.2,189.2 1156.1,188.4 1156.1,211.5 1147.2,211.8" fill="#17191a"/>
<polygon points="1148.3,190.3 1155.8,189.6 1155.8,192.8 1148.3,193.4" fill="#bbb0ad"/>
<polygon points="1148.6,196.4 1151.2,196.2 1151.2,207.1 1148.6,207.2" fill="#c4b0aa"/>
<polygon points="1153.8,196.0 1155.9,195.8 1155.9,206.9 1153.8,207.0" fill="#c4b0aa"/>
<polygon points="1148.5,210.0 1155.7,209.7 1155.7,210.5 1148.5,210.8" fill="#8d8782" opacity="0.6"/>
<polygon points="1161.0,169.7 1170.8,168.3 1170.8,186.3 1161.0,187.3" fill="#363b3e"/>
<polygon points="1161.0,187.9 1170.8,187.0 1170.8,210.9 1161.0,211.3" fill="#17191a"/>
<polygon points="1162.2,189.0 1170.5,188.2 1170.5,191.6 1162.2,192.3" fill="#bbb0ad"/>
<polygon points="1162.6,195.3 1165.4,195.1 1165.4,206.4 1162.6,206.5" fill="#c4b0aa"/>
<polygon points="1168.3,194.9 1170.6,194.7 1170.6,206.1 1168.3,206.3" fill="#c4b0aa"/>
<polygon points="1162.5,209.4 1170.3,209.0 1170.3,209.9 1162.5,210.2" fill="#8d8782" opacity="0.6"/>
<polygon points="1175.7,167.7 1180.6,167.0 1180.6,185.4 1175.7,185.9" fill="#363b3e"/>
<polygon points="1189.5,165.8 1203.6,163.8 1203.6,183.2 1189.5,184.5" fill="#363b3e"/>
<polygon points="1189.5,185.3 1203.6,184.0 1203.6,209.6 1189.5,210.2" fill="#17191a"/>
<polygon points="1191.2,186.4 1203.2,185.3 1203.2,188.9 1191.2,189.9" fill="#bbb0ad"/>
<polygon points="1191.8,193.1 1195.8,192.8 1195.8,204.9 1191.8,205.1" fill="#c4b0aa"/>
<polygon points="1199.9,192.4 1203.3,192.2 1203.3,204.5 1199.9,204.7" fill="#c4b0aa"/>
<polygon points="1191.6,208.1 1202.9,207.6 1202.9,208.5 1191.6,209.0" fill="#8d8782" opacity="0.6"/>
<polygon points="1208.7,163.2 1221.9,161.4 1221.9,181.5 1208.7,182.7" fill="#363b3e"/>
<polygon points="1208.7,183.5 1221.9,182.2 1221.9,208.9 1208.7,209.4" fill="#17191a"/>
<polygon points="1210.3,184.6 1221.5,183.6 1221.5,187.3 1210.3,188.3" fill="#bbb0ad"/>
<polygon points="1210.8,191.6 1214.6,191.3 1214.6,203.9 1210.8,204.1" fill="#c4b0aa"/>
<polygon points="1218.5,191.0 1221.6,190.8 1221.6,203.6 1218.5,203.7" fill="#c4b0aa"/>
<polygon points="1210.7,207.3 1221.2,206.8 1221.2,207.7 1210.7,208.2" fill="#8d8782" opacity="0.6"/>
<polygon points="1227.8,160.5 1241.5,158.7 1241.5,179.6 1227.8,180.9" fill="#363b3e"/>
<polygon points="1227.8,181.7 1241.5,180.4 1241.5,208.1 1227.8,208.7" fill="#17191a"/>
<polygon points="1229.4,182.9 1241.1,181.8 1241.1,185.7 1229.4,186.7" fill="#bbb0ad"/>
<polygon points="1230.0,190.2 1234.0,189.9 1234.0,203.0 1230.0,203.2" fill="#c4b0aa"/>
<polygon points="1237.9,189.6 1241.2,189.3 1241.2,202.6 1237.9,202.8" fill="#c4b0aa"/>
<polygon points="1229.9,206.4 1240.8,206.0 1240.8,206.9 1229.9,207.4" fill="#8d8782" opacity="0.6"/>
<polygon points="1247.4,157.9 1255.7,156.7 1255.7,178.2 1247.4,179.0" fill="#363b3e"/>
<polygon points="1247.4,179.9 1255.7,179.1 1255.7,207.6 1247.4,207.9" fill="#17191a"/>
<polygon points="1249.1,181.4 1255.4,180.8 1255.4,184.2 1249.1,184.8" fill="#b0a09b" opacity="0.85"/>
<polygon points="1249.2,188.7 1252.4,188.5 1252.4,200.4 1249.2,200.5" fill="#ab948d" opacity="0.9"/>
<polygon points="1261.8,155.9 1279.0,153.6 1279.0,176.0 1261.8,177.7" fill="#363b3e"/>
<polygon points="1261.8,178.5 1279.0,176.9 1279.0,206.7 1261.8,207.4" fill="#17191a"/>
<polygon points="1263.9,179.8 1278.5,178.4 1278.5,182.6 1263.9,183.8" fill="#bbb0ad"/>
<polygon points="1264.6,187.5 1269.5,187.1 1269.5,201.2 1264.6,201.4" fill="#c4b0aa"/>
<polygon points="1274.5,186.8 1278.7,186.5 1278.7,200.7 1274.5,200.9" fill="#c4b0aa"/>
<polygon points="1264.4,204.9 1278.1,204.3 1278.1,205.4 1264.4,206.0" fill="#8d8782" opacity="0.6"/>
<polygon points="1298.1,151.0 1317.8,148.3 1317.8,172.3 1298.1,174.2" fill="#363b3e"/>
<polygon points="1298.1,175.1 1317.8,173.3 1317.8,205.2 1298.1,205.9" fill="#17191a"/>
<polygon points="1300.5,176.4 1317.2,174.9 1317.2,179.4 1300.5,180.8" fill="#bbb0ad"/>
<polygon points="1301.3,184.7 1307.0,184.3 1307.0,199.3 1301.3,199.6" fill="#c4b0aa"/>
<polygon points="1312.7,183.9 1317.4,183.5 1317.4,198.8 1312.7,199.0" fill="#c4b0aa"/>
<polygon points="1301.1,203.3 1316.8,202.7 1316.8,203.8 1301.1,204.4" fill="#8d8782" opacity="0.6"/>
<polygon points="1324.7,147.3 1335.5,145.9 1335.5,170.6 1324.7,171.7" fill="#363b3e"/>
<polygon points="1324.7,172.6 1335.5,171.6 1335.5,204.5 1324.7,204.9" fill="#17191a"/>
<polygon points="1326.0,174.1 1335.2,173.3 1335.2,177.9 1326.0,178.6" fill="#bbb0ad"/>
<polygon points="1326.4,182.8 1329.6,182.6 1329.6,198.2 1326.4,198.4" fill="#c4b0aa"/>
<polygon points="1332.7,182.3 1335.3,182.1 1335.3,197.9 1332.7,198.0" fill="#c4b0aa"/>
<polygon points="1326.3,202.2 1335.0,201.9 1335.0,203.0 1326.3,203.4" fill="#8d8782" opacity="0.6"/>
<polygon points="1056.5,183.6 1062.2,182.9 1062.2,215.4 1056.5,215.6" fill="#d66e47" stroke="#6b3422" stroke-width="0.45"/>
<polygon points="1060.9,183.2 1062.2,183.0 1062.2,215.4 1060.9,215.5" fill="#ee8558"/>
<line x1="1060.8" y1="183.4" x2="1060.8" y2="214.9" stroke="#7a3a22" stroke-width="0.5" opacity="0.8"/>
<polygon points="1064.1,182.6 1067.7,182.1 1067.7,215.2 1064.1,215.3" fill="#d66e47" stroke="#6b3422" stroke-width="0.45"/>
<polygon points="1066.4,182.4 1067.7,182.3 1067.7,215.2 1066.4,215.3" fill="#ee8558"/>
<line x1="1066.3" y1="182.6" x2="1066.3" y2="214.7" stroke="#7a3a22" stroke-width="0.5" opacity="0.8"/>
<polygon points="1073.2,181.4 1076.5,180.9 1076.5,214.9 1073.2,215.0" fill="#d66e47" stroke="#6b3422" stroke-width="0.45"/>
<polygon points="1078.5,180.6 1082.4,180.1 1082.4,214.6 1078.5,214.8" fill="#d66e47" stroke="#6b3422" stroke-width="0.45"/>
<polygon points="1081.1,180.4 1082.4,180.3 1082.4,214.6 1081.1,214.7" fill="#ee8558"/>
<line x1="1081.0" y1="180.6" x2="1081.0" y2="214.1" stroke="#7a3a22" stroke-width="0.5" opacity="0.8"/>
<polygon points="1088.3,179.3 1093.6,178.6 1093.6,214.2 1088.3,214.4" fill="#d66e47" stroke="#6b3422" stroke-width="0.45"/>
<polygon points="1092.3,178.9 1093.6,178.7 1093.6,214.2 1092.3,214.3" fill="#ee8558"/>
<line x1="1092.2" y1="179.1" x2="1092.2" y2="213.7" stroke="#7a3a22" stroke-width="0.5" opacity="0.8"/>
<polygon points="1096.2,178.2 1100.1,177.7 1100.1,214.0 1096.2,214.1" fill="#d66e47" stroke="#6b3422" stroke-width="0.45"/>
<polygon points="1098.8,178.0 1100.1,177.8 1100.1,214.0 1098.8,214.0" fill="#ee8558"/>
<line x1="1098.7" y1="178.2" x2="1098.7" y2="213.5" stroke="#7a3a22" stroke-width="0.5" opacity="0.8"/>
<polygon points="1102.1,177.4 1107.0,176.7 1107.0,213.7 1102.1,213.9" fill="#d66e47" stroke="#6b3422" stroke-width="0.45"/>
<polygon points="1105.7,177.1 1107.0,176.9 1107.0,213.7 1105.7,213.7" fill="#ee8558"/>
<line x1="1105.6" y1="177.2" x2="1105.6" y2="213.2" stroke="#7a3a22" stroke-width="0.5" opacity="0.8"/>
<polygon points="1113.9,175.8 1122.3,174.6 1122.3,213.1 1113.9,213.4" fill="#d66e47" stroke="#6b3422" stroke-width="0.45"/>
<polygon points="1121.0,175.0 1122.3,174.8 1122.3,213.1 1121.0,213.2" fill="#ee8558"/>
<line x1="1120.9" y1="175.1" x2="1120.9" y2="212.6" stroke="#7a3a22" stroke-width="0.5" opacity="0.8"/>
<polygon points="1129.6,173.6 1134.1,173.0 1134.1,212.7 1129.6,212.8" fill="#d66e47" stroke="#6b3422" stroke-width="0.45"/>
<polygon points="1132.8,173.4 1134.1,173.2 1134.1,212.7 1132.8,212.7" fill="#ee8558"/>
<line x1="1132.7" y1="173.5" x2="1132.7" y2="212.2" stroke="#7a3a22" stroke-width="0.5" opacity="0.8"/>
<polygon points="1142.3,171.9 1147.2,171.2 1147.2,212.2 1142.3,212.3" fill="#d66e47" stroke="#6b3422" stroke-width="0.45"/>
<polygon points="1145.9,171.6 1147.2,171.4 1147.2,212.2 1145.9,212.2" fill="#ee8558"/>
<line x1="1145.8" y1="171.7" x2="1145.8" y2="211.7" stroke="#7a3a22" stroke-width="0.5" opacity="0.8"/>
<polygon points="1156.1,170.0 1161.0,169.3 1161.0,211.6 1156.1,211.8" fill="#d66e47" stroke="#6b3422" stroke-width="0.45"/>
<polygon points="1159.7,169.7 1161.0,169.5 1161.0,211.6 1159.7,211.7" fill="#ee8558"/>
<line x1="1159.6" y1="169.8" x2="1159.6" y2="211.1" stroke="#7a3a22" stroke-width="0.5" opacity="0.8"/>
<polygon points="1170.8,168.0 1175.7,167.3 1175.7,211.1 1170.8,211.3" fill="#d66e47" stroke="#6b3422" stroke-width="0.45"/>
<polygon points="1174.4,167.7 1175.7,167.5 1175.7,211.1 1174.4,211.1" fill="#ee8558"/>
<line x1="1174.3" y1="167.8" x2="1174.3" y2="210.6" stroke="#7a3a22" stroke-width="0.5" opacity="0.8"/>
<polygon points="1180.6,166.6 1189.5,165.4 1189.5,210.5 1180.6,210.9" fill="#d66e47" stroke="#6b3422" stroke-width="0.45"/>
<polygon points="1188.2,165.8 1189.5,165.6 1189.5,210.5 1188.2,210.6" fill="#ee8558"/>
<line x1="1188.1" y1="165.9" x2="1188.1" y2="210.0" stroke="#7a3a22" stroke-width="0.5" opacity="0.8"/>
<polygon points="1203.6,163.5 1208.7,162.8 1208.7,209.8 1203.6,210.0" fill="#d66e47" stroke="#6b3422" stroke-width="0.45"/>
<polygon points="1207.4,163.2 1208.7,163.0 1208.7,209.8 1207.4,209.9" fill="#ee8558"/>
<line x1="1207.3" y1="163.3" x2="1207.3" y2="209.3" stroke="#7a3a22" stroke-width="0.5" opacity="0.8"/>
<polygon points="1221.9,161.0 1227.8,160.2 1227.8,209.1 1221.9,209.3" fill="#d66e47" stroke="#6b3422" stroke-width="0.45"/>
<polygon points="1226.5,160.6 1227.8,160.4 1227.8,209.1 1226.5,209.1" fill="#ee8558"/>
<line x1="1226.4" y1="160.7" x2="1226.4" y2="208.6" stroke="#7a3a22" stroke-width="0.5" opacity="0.8"/>
<polygon points="1241.5,158.3 1247.4,157.5 1247.4,208.3 1241.5,208.6" fill="#d66e47" stroke="#6b3422" stroke-width="0.45"/>
<polygon points="1246.1,157.9 1247.4,157.7 1247.4,208.3 1246.1,208.4" fill="#ee8558"/>
<line x1="1246.0" y1="158.0" x2="1246.0" y2="207.8" stroke="#7a3a22" stroke-width="0.5" opacity="0.8"/>
<polygon points="1255.7,156.3 1261.8,155.5 1261.8,207.8 1255.7,208.0" fill="#d66e47" stroke="#6b3422" stroke-width="0.45"/>
<polygon points="1260.5,155.9 1261.8,155.7 1261.8,207.8 1260.5,207.8" fill="#ee8558"/>
<line x1="1260.4" y1="156.0" x2="1260.4" y2="207.3" stroke="#7a3a22" stroke-width="0.5" opacity="0.8"/>
<polygon points="1279.0,153.1 1298.1,150.5 1298.1,206.4 1279.0,207.1" fill="#d66e47" stroke="#6b3422" stroke-width="0.45"/>
<polygon points="1317.8,147.8 1324.7,146.9 1324.7,205.4 1317.8,205.6" fill="#d66e47" stroke="#6b3422" stroke-width="0.45"/>
<polygon points="1323.4,147.3 1324.7,147.2 1324.7,205.4 1323.4,205.4" fill="#ee8558"/>
<line x1="1323.3" y1="147.4" x2="1323.3" y2="204.9" stroke="#7a3a22" stroke-width="0.5" opacity="0.8"/>
<polygon points="1335.5,145.4 1356.0,142.6 1356.0,204.2 1335.5,205.0" fill="#d66e47" stroke="#6b3422" stroke-width="0.45"/>
<polygon points="1067.7,222.4 1073.2,222.3 1073.2,242.4 1067.7,242.2" fill="#17191a"/>
<polygon points="1068.8,223.6 1073.0,223.5 1073.0,225.9 1068.8,225.9" fill="#b0a09b" opacity="0.85"/>
<polygon points="1068.9,228.7 1071.0,228.7 1071.0,237.1 1068.9,237.1" fill="#ab948d" opacity="0.9"/>
<polygon points="1082.4,222.1 1088.3,222.0 1088.3,243.1 1082.4,242.8" fill="#17191a"/>
<polygon points="1083.6,223.4 1088.1,223.3 1088.1,225.8 1083.6,225.8" fill="#b0a09b" opacity="0.85"/>
<polygon points="1083.7,228.8 1085.9,228.8 1085.9,237.5 1083.7,237.5" fill="#ab948d" opacity="0.9"/>
<polygon points="1107.0,221.7 1113.9,221.6 1113.9,244.2 1107.0,243.9" fill="#17191a"/>
<polygon points="1108.4,223.0 1113.6,223.0 1113.6,225.7 1108.4,225.7" fill="#b0a09b" opacity="0.85"/>
<polygon points="1108.5,228.8 1111.1,228.8 1111.1,238.2 1108.5,238.1" fill="#ab948d" opacity="0.9"/>
<polygon points="1122.3,221.5 1129.6,221.3 1129.6,244.8 1122.3,244.5" fill="#17191a"/>
<polygon points="1123.8,222.8 1129.3,222.7 1129.3,225.6 1123.8,225.6" fill="#b0a09b" opacity="0.85"/>
<polygon points="1123.9,228.8 1126.7,228.8 1126.7,238.6 1123.9,238.6" fill="#ab948d" opacity="0.9"/>
<polygon points="1134.1,221.3 1142.3,221.1 1142.3,245.4 1134.1,245.0" fill="#17191a"/>
<polygon points="1135.7,222.7 1142.0,222.6 1142.0,225.5 1135.7,225.5" fill="#b0a09b" opacity="0.85"/>
<polygon points="1135.9,228.9 1139.0,228.9 1139.0,239.0 1135.9,238.9" fill="#ab948d" opacity="0.9"/>
<polygon points="1147.2,221.0 1156.1,220.9 1156.1,245.9 1147.2,245.6" fill="#17191a"/>
<polygon points="1148.3,222.3 1155.8,222.1 1155.8,225.7 1148.3,225.7" fill="#bbb0ad"/>
<polygon points="1148.6,228.9 1151.2,228.9 1151.2,240.8 1148.6,240.7" fill="#c4b0aa"/>
<polygon points="1153.8,228.9 1155.9,228.9 1155.9,240.9 1153.8,240.9" fill="#c4b0aa"/>
<polygon points="1148.5,243.7 1155.7,243.9 1155.7,244.8 1148.5,244.5" fill="#8d8782" opacity="0.6"/>
<polygon points="1161.0,220.8 1170.8,220.6 1170.8,246.6 1161.0,246.1" fill="#17191a"/>
<polygon points="1162.2,222.1 1170.5,221.9 1170.5,225.6 1162.2,225.6" fill="#bbb0ad"/>
<polygon points="1162.6,228.9 1165.4,228.9 1165.4,241.2 1162.6,241.1" fill="#c4b0aa"/>
<polygon points="1168.3,228.9 1170.6,228.9 1170.6,241.4 1168.3,241.3" fill="#c4b0aa"/>
<polygon points="1162.5,244.2 1170.3,244.5 1170.3,245.4 1162.5,245.1" fill="#8d8782" opacity="0.6"/>
<polygon points="1175.7,220.6 1180.8,220.5 1180.8,247.0 1175.7,246.8" fill="#17191a"/>
<polygon points="1176.7,222.1 1180.6,222.1 1180.6,225.2 1176.7,225.3" fill="#b0a09b" opacity="0.85"/>
<polygon points="1176.8,229.0 1178.8,229.0 1178.8,240.0 1176.8,240.0" fill="#ab948d" opacity="0.9"/>
<polygon points="1183.8,220.4 1193.2,220.3 1193.2,247.5 1183.8,247.1" fill="#17191a"/>
<polygon points="1184.9,221.7 1192.9,221.6 1192.9,225.4 1184.9,225.5" fill="#bbb0ad"/>
<polygon points="1185.3,229.0 1188.0,229.0 1188.0,241.9 1185.3,241.8" fill="#c4b0aa"/>
<polygon points="1190.8,229.0 1193.0,229.0 1193.0,242.1 1190.8,242.0" fill="#c4b0aa"/>
<polygon points="1185.2,245.0 1192.7,245.3 1192.7,246.3 1185.2,246.0" fill="#8d8782" opacity="0.6"/>
<polygon points="1208.7,220.0 1221.9,219.8 1221.9,248.7 1208.7,248.2" fill="#17191a"/>
<polygon points="1210.3,221.4 1221.5,221.2 1221.5,225.3 1210.3,225.4" fill="#bbb0ad"/>
<polygon points="1210.8,229.0 1214.6,229.0 1214.6,242.7 1210.8,242.6" fill="#c4b0aa"/>
<polygon points="1218.5,229.0 1221.6,229.0 1221.6,242.9 1218.5,242.8" fill="#c4b0aa"/>
<polygon points="1210.7,246.0 1221.2,246.4 1221.2,247.4 1210.7,247.0" fill="#8d8782" opacity="0.6"/>
<polygon points="1227.8,219.7 1241.5,219.5 1241.5,249.6 1227.8,249.0" fill="#17191a"/>
<polygon points="1229.4,221.1 1241.1,221.0 1241.1,225.2 1229.4,225.2" fill="#bbb0ad"/>
<polygon points="1230.0,229.1 1234.0,229.1 1234.0,243.3 1230.0,243.2" fill="#c4b0aa"/>
<polygon points="1237.9,229.1 1241.2,229.1 1241.2,243.5 1237.9,243.4" fill="#c4b0aa"/>
<polygon points="1229.9,246.7 1240.8,247.1 1240.8,248.2 1229.9,247.7" fill="#8d8782" opacity="0.6"/>
<polygon points="1247.4,219.4 1255.7,219.2 1255.7,250.2 1247.4,249.8" fill="#17191a"/>
<polygon points="1249.1,221.2 1255.4,221.1 1255.4,224.8 1249.1,224.8" fill="#b0a09b" opacity="0.85"/>
<polygon points="1249.2,229.1 1252.4,229.1 1252.4,242.0 1249.2,241.9" fill="#ab948d" opacity="0.9"/>
<polygon points="1261.8,219.1 1279.0,218.8 1279.0,251.2 1261.8,250.4" fill="#17191a"/>
<polygon points="1263.9,220.7 1278.5,220.5 1278.5,225.0 1263.9,225.1" fill="#bbb0ad"/>
<polygon points="1264.6,229.1 1269.5,229.2 1269.5,244.4 1264.6,244.2" fill="#c4b0aa"/>
<polygon points="1274.5,229.2 1278.7,229.2 1278.7,244.7 1274.5,244.5" fill="#c4b0aa"/>
<polygon points="1264.4,248.0 1278.1,248.5 1278.1,249.7 1264.4,249.1" fill="#8d8782" opacity="0.6"/>
<polygon points="1298.1,218.5 1317.8,218.2 1317.8,252.8 1298.1,252.0" fill="#17191a"/>
<polygon points="1300.5,220.1 1317.2,219.9 1317.2,224.8 1300.5,224.8" fill="#bbb0ad"/>
<polygon points="1301.3,229.2 1307.0,229.2 1307.0,245.5 1301.3,245.4" fill="#c4b0aa"/>
<polygon points="1312.7,229.2 1317.4,229.3 1317.4,245.9 1312.7,245.7" fill="#c4b0aa"/>
<polygon points="1301.1,249.4 1316.8,250.0 1316.8,251.2 1301.1,250.6" fill="#8d8782" opacity="0.6"/>
<polygon points="1324.7,218.1 1335.5,217.9 1335.5,253.5 1324.7,253.1" fill="#17191a"/>
<polygon points="1326.0,219.8 1335.2,219.7 1335.2,224.7 1326.0,224.7" fill="#bbb0ad"/>
<polygon points="1326.4,229.3 1329.6,229.3 1329.6,246.2 1326.4,246.1" fill="#c4b0aa"/>
<polygon points="1332.7,229.3 1335.3,229.3 1335.3,246.4 1332.7,246.3" fill="#c4b0aa"/>
<polygon points="1326.3,250.3 1335.0,250.7 1335.0,251.9 1326.3,251.6" fill="#8d8782" opacity="0.6"/>
<polygon points="1056.5,219.7 1062.2,219.6 1062.2,242.1 1056.5,241.9" fill="#d66e47" stroke="#6b3422" stroke-width="0.45"/>
<polygon points="1060.9,219.8 1062.2,219.7 1062.2,242.1 1060.9,242.1" fill="#ee8558"/>
<line x1="1060.8" y1="220.1" x2="1060.8" y2="241.6" stroke="#7a3a22" stroke-width="0.5" opacity="0.8"/>
<polygon points="1064.1,219.5 1067.7,219.4 1067.7,242.4 1064.1,242.2" fill="#d66e47" stroke="#6b3422" stroke-width="0.45"/>
<polygon points="1066.4,219.6 1067.7,219.6 1067.7,242.4 1066.4,242.3" fill="#ee8558"/>
<line x1="1066.3" y1="219.9" x2="1066.3" y2="241.9" stroke="#7a3a22" stroke-width="0.5" opacity="0.8"/>
<polygon points="1073.2,219.3 1076.5,219.2 1076.5,242.7 1073.2,242.6" fill="#d66e47" stroke="#6b3422" stroke-width="0.45"/>
<polygon points="1078.5,219.2 1082.4,219.1 1082.4,243.0 1078.5,242.8" fill="#d66e47" stroke="#6b3422" stroke-width="0.45"/>
<polygon points="1081.1,219.3 1082.4,219.2 1082.4,243.0 1081.1,242.9" fill="#ee8558"/>
<line x1="1081.0" y1="219.6" x2="1081.0" y2="242.5" stroke="#7a3a22" stroke-width="0.5" opacity="0.8"/>
<polygon points="1088.3,218.9 1093.6,218.8 1093.6,243.5 1088.3,243.2" fill="#d66e47" stroke="#6b3422" stroke-width="0.45"/>
<polygon points="1092.3,219.0 1093.6,218.9 1093.6,243.5 1092.3,243.4" fill="#ee8558"/>
<line x1="1092.2" y1="219.3" x2="1092.2" y2="243.0" stroke="#7a3a22" stroke-width="0.5" opacity="0.8"/>
<polygon points="1096.2,218.7 1100.1,218.6 1100.1,243.7 1096.2,243.6" fill="#d66e47" stroke="#6b3422" stroke-width="0.45"/>
<polygon points="1098.8,218.8 1100.1,218.8 1100.1,243.7 1098.8,243.7" fill="#ee8558"/>
<line x1="1098.7" y1="219.1" x2="1098.7" y2="243.2" stroke="#7a3a22" stroke-width="0.5" opacity="0.8"/>
<polygon points="1102.1,218.6 1107.0,218.4 1107.0,244.0 1102.1,243.8" fill="#d66e47" stroke="#6b3422" stroke-width="0.45"/>
<polygon points="1105.7,218.6 1107.0,218.6 1107.0,244.0 1105.7,244.0" fill="#ee8558"/>
<line x1="1105.6" y1="218.9" x2="1105.6" y2="243.5" stroke="#7a3a22" stroke-width="0.5" opacity="0.8"/>
<polygon points="1113.9,218.2 1122.3,218.0 1122.3,244.7 1113.9,244.3" fill="#d66e47" stroke="#6b3422" stroke-width="0.45"/>
<polygon points="1121.0,218.3 1122.3,218.2 1122.3,244.7 1121.0,244.6" fill="#ee8558"/>
<line x1="1120.9" y1="218.5" x2="1120.9" y2="244.2" stroke="#7a3a22" stroke-width="0.5" opacity="0.8"/>
<polygon points="1129.6,217.8 1134.1,217.7 1134.1,245.2 1129.6,245.0" fill="#d66e47" stroke="#6b3422" stroke-width="0.45"/>
<polygon points="1132.8,218.0 1134.1,217.9 1134.1,245.2 1132.8,245.1" fill="#ee8558"/>
<line x1="1132.7" y1="218.2" x2="1132.7" y2="244.7" stroke="#7a3a22" stroke-width="0.5" opacity="0.8"/>
<polygon points="1142.3,217.5 1147.2,217.4 1147.2,245.8 1142.3,245.6" fill="#d66e47" stroke="#6b3422" stroke-width="0.45"/>
<polygon points="1145.9,217.6 1147.2,217.6 1147.2,245.8 1145.9,245.7" fill="#ee8558"/>
<line x1="1145.8" y1="217.9" x2="1145.8" y2="245.3" stroke="#7a3a22" stroke-width="0.5" opacity="0.8"/>
<polygon points="1156.1,217.2 1161.0,217.0 1161.0,246.4 1156.1,246.1" fill="#d66e47" stroke="#6b3422" stroke-width="0.45"/>
<polygon points="1159.7,217.3 1161.0,217.2 1161.0,246.4 1159.7,246.3" fill="#ee8558"/>
<line x1="1159.6" y1="217.5" x2="1159.6" y2="245.9" stroke="#7a3a22" stroke-width="0.5" opacity="0.8"/>
<polygon points="1170.8,216.8 1175.7,216.7 1175.7,247.0 1170.8,246.8" fill="#d66e47" stroke="#6b3422" stroke-width="0.45"/>
<polygon points="1174.4,216.9 1175.7,216.9 1175.7,247.0 1174.4,246.9" fill="#ee8558"/>
<line x1="1174.3" y1="217.2" x2="1174.3" y2="246.5" stroke="#7a3a22" stroke-width="0.5" opacity="0.8"/>
<polygon points="1180.8,216.5 1183.8,216.5 1183.8,247.3 1180.8,247.2" fill="#d66e47" stroke="#6b3422" stroke-width="0.45"/>
<polygon points="1193.2,216.2 1198.9,216.1 1198.9,248.0 1193.2,247.7" fill="#d66e47" stroke="#6b3422" stroke-width="0.45"/>
<polygon points="1197.6,216.3 1198.9,216.3 1198.9,248.0 1197.6,247.9" fill="#ee8558"/>
<line x1="1197.5" y1="216.6" x2="1197.5" y2="247.5" stroke="#7a3a22" stroke-width="0.5" opacity="0.8"/>
<polygon points="1203.6,216.0 1208.7,215.8 1208.7,248.4 1203.6,248.2" fill="#d66e47" stroke="#6b3422" stroke-width="0.45"/>
<polygon points="1207.4,216.1 1208.7,216.1 1208.7,248.4 1207.4,248.3" fill="#ee8558"/>
<line x1="1207.3" y1="216.3" x2="1207.3" y2="247.9" stroke="#7a3a22" stroke-width="0.5" opacity="0.8"/>
<polygon points="1221.9,215.5 1227.8,215.3 1227.8,249.2 1221.9,249.0" fill="#d66e47" stroke="#6b3422" stroke-width="0.45"/>
<polygon points="1226.5,215.6 1227.8,215.6 1227.8,249.2 1226.5,249.2" fill="#ee8558"/>
<line x1="1226.4" y1="215.8" x2="1226.4" y2="248.7" stroke="#7a3a22" stroke-width="0.5" opacity="0.8"/>
<polygon points="1241.5,215.0 1247.4,214.8 1247.4,250.1 1241.5,249.8" fill="#d66e47" stroke="#6b3422" stroke-width="0.45"/>
<polygon points="1246.1,215.1 1247.4,215.1 1247.4,250.1 1246.1,250.0" fill="#ee8558"/>
<line x1="1246.0" y1="215.3" x2="1246.0" y2="249.6" stroke="#7a3a22" stroke-width="0.5" opacity="0.8"/>
<polygon points="1255.7,214.6 1261.8,214.5 1261.8,250.7 1255.7,250.4" fill="#d66e47" stroke="#6b3422" stroke-width="0.45"/>
<polygon points="1260.5,214.7 1261.8,214.7 1261.8,250.7 1260.5,250.6" fill="#ee8558"/>
<line x1="1260.4" y1="215.0" x2="1260.4" y2="250.2" stroke="#7a3a22" stroke-width="0.5" opacity="0.8"/>
<polygon points="1279.0,214.0 1298.1,213.5 1298.1,252.2 1279.0,251.4" fill="#d66e47" stroke="#6b3422" stroke-width="0.45"/>
<polygon points="1317.8,213.0 1324.7,212.9 1324.7,253.4 1317.8,253.1" fill="#d66e47" stroke="#6b3422" stroke-width="0.45"/>
<polygon points="1323.4,213.2 1324.7,213.1 1324.7,253.4 1323.4,253.3" fill="#ee8558"/>
<line x1="1323.3" y1="213.4" x2="1323.3" y2="252.9" stroke="#7a3a22" stroke-width="0.5" opacity="0.8"/>
<polygon points="1335.5,212.6 1356.0,212.1 1356.0,254.7 1335.5,253.8" fill="#d66e47" stroke="#6b3422" stroke-width="0.45"/>
<polygon points="1067.7,250.0 1073.2,250.4 1073.2,272.2 1067.7,271.5" fill="#17191a"/>
<polygon points="1068.8,251.4 1073.0,251.7 1073.0,254.3 1068.8,254.0" fill="#b0a09b" opacity="0.85"/>
<polygon points="1068.9,257.0 1071.0,257.2 1071.0,266.3 1068.9,266.0" fill="#ab948d" opacity="0.9"/>
<polygon points="1082.4,251.0 1088.3,251.4 1088.3,274.2 1082.4,273.4" fill="#17191a"/>
<polygon points="1083.6,252.4 1088.1,252.7 1088.1,255.4 1083.6,255.1" fill="#b0a09b" opacity="0.85"/>
<polygon points="1083.7,258.3 1085.9,258.5 1085.9,268.0 1083.7,267.7" fill="#ab948d" opacity="0.9"/>
<polygon points="1107.0,252.6 1113.9,253.0 1113.9,277.5 1107.0,276.6" fill="#17191a"/>
<polygon points="1108.4,254.1 1113.6,254.5 1113.6,257.4 1108.4,257.0" fill="#b0a09b" opacity="0.85"/>
<polygon points="1108.5,260.4 1111.1,260.6 1111.1,270.8 1108.5,270.5" fill="#ab948d" opacity="0.9"/>
<polygon points="1122.3,253.6 1129.6,254.1 1129.6,279.5 1122.3,278.6" fill="#17191a"/>
<polygon points="1123.8,255.2 1129.3,255.6 1129.3,258.6 1123.8,258.2" fill="#b0a09b" opacity="0.85"/>
<polygon points="1123.9,261.7 1126.7,262.0 1126.7,272.6 1123.9,272.3" fill="#ab948d" opacity="0.9"/>
<polygon points="1134.1,254.4 1142.3,254.9 1142.3,281.2 1134.1,280.1" fill="#17191a"/>
<polygon points="1135.7,256.0 1142.0,256.5 1142.0,259.6 1135.7,259.1" fill="#b0a09b" opacity="0.85"/>
<polygon points="1135.9,262.8 1139.0,263.0 1139.0,274.0 1135.9,273.6" fill="#ab948d" opacity="0.9"/>
<polygon points="1147.2,255.2 1156.1,255.8 1156.1,283.0 1147.2,281.8" fill="#17191a"/>
<polygon points="1148.3,256.6 1155.8,257.2 1155.8,261.0 1148.3,260.4" fill="#bbb0ad"/>
<polygon points="1148.6,263.9 1151.2,264.1 1151.2,277.0 1148.6,276.7" fill="#c4b0aa"/>
<polygon points="1153.8,264.3 1155.9,264.5 1155.9,277.5 1153.8,277.3" fill="#c4b0aa"/>
<polygon points="1148.5,279.9 1155.7,280.7 1155.7,281.7 1148.5,280.8" fill="#8d8782" opacity="0.6"/>
<polygon points="1161.0,256.1 1170.8,256.8 1170.8,284.9 1161.0,283.6" fill="#17191a"/>
<polygon points="1162.2,257.6 1170.5,258.2 1170.5,262.1 1162.2,261.5" fill="#bbb0ad"/>
<polygon points="1162.6,265.1 1165.4,265.3 1165.4,278.6 1162.6,278.3" fill="#c4b0aa"/>
<polygon points="1168.3,265.6 1170.6,265.8 1170.6,279.2 1168.3,279.0" fill="#c4b0aa"/>
<polygon points="1162.5,281.6 1170.3,282.6 1170.3,283.6 1162.5,282.6" fill="#8d8782" opacity="0.6"/>
<polygon points="1175.7,257.1 1187.1,257.9 1187.1,287.0 1175.7,285.5" fill="#17191a"/>
<polygon points="1177.1,258.6 1186.8,259.3 1186.8,263.4 1177.1,262.6" fill="#bbb0ad"/>
<polygon points="1177.5,266.4 1180.8,266.6 1180.8,280.4 1177.5,280.0" fill="#c4b0aa"/>
<polygon points="1184.1,266.9 1186.9,267.2 1186.9,281.1 1184.1,280.8" fill="#c4b0aa"/>
<polygon points="1177.4,283.5 1186.5,284.6 1186.5,285.6 1177.4,284.5" fill="#8d8782" opacity="0.6"/>
<polygon points="1192.5,258.2 1203.6,258.9 1203.6,289.1 1192.5,287.7" fill="#17191a"/>
<polygon points="1193.8,259.8 1203.3,260.4 1203.3,264.7 1193.8,263.9" fill="#bbb0ad"/>
<polygon points="1194.3,267.8 1197.5,268.1 1197.5,282.4 1194.3,282.0" fill="#c4b0aa"/>
<polygon points="1200.7,268.4 1203.4,268.6 1203.4,283.1 1200.7,282.8" fill="#c4b0aa"/>
<polygon points="1194.2,285.5 1203.0,286.7 1203.0,287.7 1194.2,286.6" fill="#8d8782" opacity="0.6"/>
<polygon points="1208.7,259.3 1221.9,260.2 1221.9,291.5 1208.7,289.8" fill="#17191a"/>
<polygon points="1210.3,260.9 1221.5,261.7 1221.5,266.1 1210.3,265.2" fill="#bbb0ad"/>
<polygon points="1210.8,269.2 1214.6,269.6 1214.6,284.4 1210.8,283.9" fill="#c4b0aa"/>
<polygon points="1218.5,269.9 1221.6,270.2 1221.6,285.2 1218.5,284.8" fill="#c4b0aa"/>
<polygon points="1210.7,287.6 1221.2,288.9 1221.2,290.0 1210.7,288.7" fill="#8d8782" opacity="0.6"/>
<polygon points="1227.8,260.5 1241.5,261.4 1241.5,294.1 1227.8,292.3" fill="#17191a"/>
<polygon points="1229.4,262.2 1241.1,263.0 1241.1,267.6 1229.4,266.7" fill="#bbb0ad"/>
<polygon points="1230.0,270.9 1234.0,271.2 1234.0,286.7 1230.0,286.2" fill="#c4b0aa"/>
<polygon points="1237.9,271.6 1241.2,271.9 1241.2,287.5 1237.9,287.1" fill="#c4b0aa"/>
<polygon points="1229.9,290.0 1240.8,291.4 1240.8,292.5 1229.9,291.1" fill="#8d8782" opacity="0.6"/>
<polygon points="1247.4,261.8 1255.7,262.4 1255.7,295.9 1247.4,294.8" fill="#17191a"/>
<polygon points="1249.1,263.9 1255.4,264.4 1255.4,268.4 1249.1,267.9" fill="#b0a09b" opacity="0.85"/>
<polygon points="1249.2,272.5 1252.4,272.8 1252.4,286.8 1249.2,286.5" fill="#ab948d" opacity="0.9"/>
<polygon points="1261.8,262.8 1279.0,263.9 1279.0,298.9 1261.8,296.7" fill="#17191a"/>
<polygon points="1263.9,264.6 1278.5,265.6 1278.5,270.5 1263.9,269.4" fill="#bbb0ad"/>
<polygon points="1264.6,273.9 1269.5,274.3 1269.5,290.8 1264.6,290.2" fill="#c4b0aa"/>
<polygon points="1274.5,274.7 1278.7,275.1 1278.7,291.9 1274.5,291.4" fill="#c4b0aa"/>
<polygon points="1264.4,294.3 1278.1,296.0 1278.1,297.3 1264.4,295.5" fill="#8d8782" opacity="0.6"/>
<polygon points="1298.1,265.2 1317.8,266.5 1317.8,304.0 1298.1,301.4" fill="#17191a"/>
<polygon points="1300.5,267.1 1317.2,268.3 1317.2,273.5 1300.5,272.2" fill="#bbb0ad"/>
<polygon points="1301.3,277.0 1307.0,277.5 1307.0,295.2 1301.3,294.5" fill="#c4b0aa"/>
<polygon points="1312.7,278.0 1317.4,278.4 1317.4,296.4 1312.7,295.9" fill="#c4b0aa"/>
<polygon points="1301.1,298.9 1316.8,300.9 1316.8,302.2 1301.1,300.2" fill="#8d8782" opacity="0.6"/>
<polygon points="1324.7,266.9 1335.5,267.6 1335.5,306.3 1324.7,304.9" fill="#17191a"/>
<polygon points="1326.0,268.9 1335.2,269.5 1335.2,274.9 1326.0,274.2" fill="#bbb0ad"/>
<polygon points="1326.4,279.2 1329.6,279.5 1329.6,297.9 1326.4,297.5" fill="#c4b0aa"/>
<polygon points="1332.7,279.7 1335.3,280.0 1335.3,298.5 1332.7,298.2" fill="#c4b0aa"/>
<polygon points="1326.3,302.0 1335.0,303.1 1335.0,304.5 1326.3,303.4" fill="#8d8782" opacity="0.6"/>
<polygon points="1056.5,246.2 1062.2,246.5 1062.2,271.3 1056.5,270.5" fill="#d66e47" stroke="#6b3422" stroke-width="0.45"/>
<polygon points="1060.9,246.6 1062.2,246.6 1062.2,271.3 1060.9,271.1" fill="#ee8558"/>
<line x1="1060.8" y1="247.0" x2="1060.8" y2="270.8" stroke="#7a3a22" stroke-width="0.5" opacity="0.8"/>
<polygon points="1064.1,246.6 1067.7,246.8 1067.7,272.0 1064.1,271.5" fill="#d66e47" stroke="#6b3422" stroke-width="0.45"/>
<polygon points="1066.4,246.9 1067.7,247.0 1067.7,272.0 1066.4,271.8" fill="#ee8558"/>
<line x1="1066.3" y1="247.3" x2="1066.3" y2="271.5" stroke="#7a3a22" stroke-width="0.5" opacity="0.8"/>
<polygon points="1073.2,247.1 1076.5,247.3 1076.5,273.2 1073.2,272.7" fill="#d66e47" stroke="#6b3422" stroke-width="0.45"/>
<polygon points="1078.5,247.4 1082.4,247.6 1082.4,274.0 1078.5,273.4" fill="#d66e47" stroke="#6b3422" stroke-width="0.45"/>
<polygon points="1081.1,247.7 1082.4,247.8 1082.4,274.0 1081.1,273.8" fill="#ee8558"/>
<line x1="1081.0" y1="248.1" x2="1081.0" y2="273.5" stroke="#7a3a22" stroke-width="0.5" opacity="0.8"/>
<polygon points="1088.3,248.0 1093.6,248.3 1093.6,275.4 1088.3,274.7" fill="#d66e47" stroke="#6b3422" stroke-width="0.45"/>
<polygon points="1092.3,248.4 1093.6,248.4 1093.6,275.4 1092.3,275.3" fill="#ee8558"/>
<line x1="1092.2" y1="248.8" x2="1092.2" y2="274.9" stroke="#7a3a22" stroke-width="0.5" opacity="0.8"/>
<polygon points="1096.2,248.4 1100.1,248.6 1100.1,276.3 1096.2,275.8" fill="#d66e47" stroke="#6b3422" stroke-width="0.45"/>
<polygon points="1098.8,248.7 1100.1,248.8 1100.1,276.3 1098.8,276.1" fill="#ee8558"/>
<line x1="1098.7" y1="249.1" x2="1098.7" y2="275.8" stroke="#7a3a22" stroke-width="0.5" opacity="0.8"/>
<polygon points="1102.1,248.7 1107.0,249.0 1107.0,277.2 1102.1,276.5" fill="#d66e47" stroke="#6b3422" stroke-width="0.45"/>
<polygon points="1105.7,249.1 1107.0,249.2 1107.0,277.2 1105.7,277.0" fill="#ee8558"/>
<line x1="1105.6" y1="249.5" x2="1105.6" y2="276.7" stroke="#7a3a22" stroke-width="0.5" opacity="0.8"/>
<polygon points="1113.9,249.4 1122.3,249.9 1122.3,279.2 1113.9,278.1" fill="#d66e47" stroke="#6b3422" stroke-width="0.45"/>
<polygon points="1121.0,250.0 1122.3,250.0 1122.3,279.2 1121.0,279.0" fill="#ee8558"/>
<line x1="1120.9" y1="250.4" x2="1120.9" y2="278.7" stroke="#7a3a22" stroke-width="0.5" opacity="0.8"/>
<polygon points="1129.6,250.3 1134.1,250.5 1134.1,280.8 1129.6,280.2" fill="#d66e47" stroke="#6b3422" stroke-width="0.45"/>
<polygon points="1132.8,250.6 1134.1,250.7 1134.1,280.8 1132.8,280.6" fill="#ee8558"/>
<line x1="1132.7" y1="251.0" x2="1132.7" y2="280.3" stroke="#7a3a22" stroke-width="0.5" opacity="0.8"/>
<polygon points="1142.3,251.0 1147.2,251.3 1147.2,282.5 1142.3,281.8" fill="#d66e47" stroke="#6b3422" stroke-width="0.45"/>
<polygon points="1145.9,251.4 1147.2,251.5 1147.2,282.5 1145.9,282.3" fill="#ee8558"/>
<line x1="1145.8" y1="251.8" x2="1145.8" y2="282.0" stroke="#7a3a22" stroke-width="0.5" opacity="0.8"/>
<polygon points="1156.1,251.8 1161.0,252.0 1161.0,284.3 1156.1,283.6" fill="#d66e47" stroke="#6b3422" stroke-width="0.45"/>
<polygon points="1159.7,252.2 1161.0,252.2 1161.0,284.3 1159.7,284.1" fill="#ee8558"/>
<line x1="1159.6" y1="252.5" x2="1159.6" y2="283.8" stroke="#7a3a22" stroke-width="0.5" opacity="0.8"/>
<polygon points="1170.8,252.6 1175.7,252.9 1175.7,286.2 1170.8,285.6" fill="#d66e47" stroke="#6b3422" stroke-width="0.45"/>
<polygon points="1174.4,253.0 1175.7,253.1 1175.7,286.2 1174.4,286.1" fill="#ee8558"/>
<line x1="1174.3" y1="253.4" x2="1174.3" y2="285.7" stroke="#7a3a22" stroke-width="0.5" opacity="0.8"/>
<polygon points="1187.1,253.5 1192.5,253.8 1192.5,288.4 1187.1,287.7" fill="#d66e47" stroke="#6b3422" stroke-width="0.45"/>
<polygon points="1191.2,254.0 1192.5,254.0 1192.5,288.4 1191.2,288.3" fill="#ee8558"/>
<line x1="1191.1" y1="254.3" x2="1191.1" y2="287.9" stroke="#7a3a22" stroke-width="0.5" opacity="0.8"/>
<polygon points="1203.6,254.4 1208.7,254.7 1208.7,290.6 1203.6,289.9" fill="#d66e47" stroke="#6b3422" stroke-width="0.45"/>
<polygon points="1207.4,254.9 1208.7,254.9 1208.7,290.6 1207.4,290.4" fill="#ee8558"/>
<line x1="1207.3" y1="255.2" x2="1207.3" y2="290.1" stroke="#7a3a22" stroke-width="0.5" opacity="0.8"/>
<polygon points="1221.9,255.5 1227.8,255.8 1227.8,293.1 1221.9,292.3" fill="#d66e47" stroke="#6b3422" stroke-width="0.45"/>
<polygon points="1226.5,256.0 1227.8,256.0 1227.8,293.1 1226.5,292.9" fill="#ee8558"/>
<line x1="1226.4" y1="256.3" x2="1226.4" y2="292.6" stroke="#7a3a22" stroke-width="0.5" opacity="0.8"/>
<polygon points="1241.5,256.6 1247.4,256.9 1247.4,295.7 1241.5,294.9" fill="#d66e47" stroke="#6b3422" stroke-width="0.45"/>
<polygon points="1246.1,257.1 1247.4,257.1 1247.4,295.7 1246.1,295.5" fill="#ee8558"/>
<line x1="1246.0" y1="257.4" x2="1246.0" y2="295.2" stroke="#7a3a22" stroke-width="0.5" opacity="0.8"/>
<polygon points="1255.7,257.4 1261.8,257.7 1261.8,297.5 1255.7,296.7" fill="#d66e47" stroke="#6b3422" stroke-width="0.45"/>
<polygon points="1260.5,257.9 1261.8,258.0 1261.8,297.5 1260.5,297.4" fill="#ee8558"/>
<line x1="1260.4" y1="258.2" x2="1260.4" y2="297.0" stroke="#7a3a22" stroke-width="0.5" opacity="0.8"/>
<polygon points="1279.0,258.7 1298.1,259.7 1298.1,302.3 1279.0,299.8" fill="#d66e47" stroke="#6b3422" stroke-width="0.45"/>
<polygon points="1317.8,260.8 1324.7,261.2 1324.7,305.8 1317.8,304.9" fill="#d66e47" stroke="#6b3422" stroke-width="0.45"/>
<polygon points="1323.4,261.4 1324.7,261.5 1324.7,305.8 1323.4,305.6" fill="#ee8558"/>
<line x1="1323.3" y1="261.7" x2="1323.3" y2="305.3" stroke="#7a3a22" stroke-width="0.5" opacity="0.8"/>
<polygon points="1335.5,261.8 1356.0,263.0 1356.0,309.9 1335.5,307.2" fill="#d66e47" stroke="#6b3422" stroke-width="0.45"/>
<polygon points="1199.1,216.1 1203.5,216.0 1203.5,248.2 1199.1,248.0" fill="#33373a"/>
<line x1="1279.0" y1="176.0" x2="1298.1" y2="174.2" stroke="#6b3422" stroke-width="0.6"/>
<line x1="1335.5" y1="170.6" x2="1356.0" y2="168.7" stroke="#6b3422" stroke-width="0.6"/>
<line x1="1113.9" y1="191.7" x2="1122.3" y2="190.9" stroke="#6b3422" stroke-width="0.6"/>
<line x1="1180.6" y1="185.4" x2="1189.5" y2="184.5" stroke="#6b3422" stroke-width="0.6"/>
<polygon points="1262.5,257.7 1278.5,258.6 1278.5,299.7 1262.5,297.6" fill="#33373a"/>
<polygon points="1056.5,215.6 1356.0,204.2 1356.0,212.1 1056.5,219.7" fill="#f7f7ef"/>
<line x1="1056.5" y1="219.7" x2="1356.0" y2="212.1" stroke="#55554f" stroke-width="0.9"/>
<line x1="1056.5" y1="215.6" x2="1356.0" y2="204.2" stroke="#3a3a36" stroke-width="0.6"/>
<polygon points="1056.5,241.9 1082.4,243.0 1082.4,247.6 1056.5,246.2" fill="#f7f7ef"/>
<line x1="1056.5" y1="246.2" x2="1082.4" y2="247.6" stroke="#55554f" stroke-width="0.9"/>
<line x1="1056.5" y1="241.9" x2="1082.4" y2="243.0" stroke="#3a3a36" stroke-width="0.6"/>
<polygon points="1100.1,243.7 1356.0,254.7 1356.0,263.0 1100.1,248.6" fill="#f7f7ef"/>
<line x1="1100.1" y1="248.6" x2="1356.0" y2="263.0" stroke="#55554f" stroke-width="0.9"/>
<line x1="1100.1" y1="243.7" x2="1356.0" y2="254.7" stroke="#3a3a36" stroke-width="0.6"/>
<polygon points="1082.4,242.7 1100.1,243.4 1100.1,249.1 1082.4,248.1" fill="#3a3e41" stroke="#1d1f20" stroke-width="0.4"/>
<polygon points="1356.0,204.1 1360.4,204.1 1360.4,212.0 1356.0,212.0" fill="#ffffff"/>
<polygon points="1356.0,254.8 1360.4,254.8 1360.4,263.1 1356.0,263.1" fill="#ffffff"/>
<line x1="1356.0" y1="142.3" x2="1356.0" y2="310.2" stroke="#6b3422" stroke-width="0.6"/>
<line x1="1360.4" y1="142.3" x2="1360.4" y2="310.2" stroke="#6b3422" stroke-width="0.6"/>
<linearGradient id="bg1" x1="0" x2="1" y1="0" y2="0"><stop offset="0" stop-color="#565a5c"/><stop offset="0.45" stop-color="#484c4e"/><stop offset="0.72" stop-color="#373b3d"/><stop offset="1" stop-color="#34383a"/></linearGradient>
<polygon points="1056.5,270.5 1356.0,310.2 1356.0,355.0 1056.5,293.7" fill="url(#bg1)" stroke="#1b1b1b" stroke-width="0.7"/>
<line x1="1057.5" y1="275.3" x2="1215.0" y2="298.3" stroke="#33373a" stroke-width="0.5" opacity="0.8"/>
<line x1="1057.5" y1="280.0" x2="1215.0" y2="305.2" stroke="#33373a" stroke-width="0.5" opacity="0.8"/>
<line x1="1057.5" y1="284.6" x2="1215.0" y2="312.1" stroke="#33373a" stroke-width="0.5" opacity="0.8"/>
<line x1="1057.5" y1="289.3" x2="1215.0" y2="319.0" stroke="#33373a" stroke-width="0.5" opacity="0.8"/>
<line x1="1060.0" y1="272.0" x2="1060.0" y2="293.4" stroke="#33373a" stroke-width="0.4" opacity="0.55"/>
<line x1="1067.0" y1="272.9" x2="1067.0" y2="294.9" stroke="#33373a" stroke-width="0.4" opacity="0.55"/>
<line x1="1074.0" y1="273.8" x2="1074.0" y2="296.3" stroke="#33373a" stroke-width="0.4" opacity="0.55"/>
<line x1="1081.0" y1="274.8" x2="1081.0" y2="297.7" stroke="#33373a" stroke-width="0.4" opacity="0.55"/>
<line x1="1088.0" y1="275.7" x2="1088.0" y2="299.1" stroke="#33373a" stroke-width="0.4" opacity="0.55"/>
<line x1="1095.0" y1="276.6" x2="1095.0" y2="300.6" stroke="#33373a" stroke-width="0.4" opacity="0.55"/>
<line x1="1102.0" y1="277.5" x2="1102.0" y2="302.0" stroke="#33373a" stroke-width="0.4" opacity="0.55"/>
<line x1="1109.0" y1="278.5" x2="1109.0" y2="303.4" stroke="#33373a" stroke-width="0.4" opacity="0.55"/>
<line x1="1116.0" y1="279.4" x2="1116.0" y2="304.8" stroke="#33373a" stroke-width="0.4" opacity="0.55"/>
<line x1="1123.0" y1="280.3" x2="1123.0" y2="306.2" stroke="#33373a" stroke-width="0.4" opacity="0.55"/>
<line x1="1130.0" y1="281.2" x2="1130.0" y2="307.7" stroke="#33373a" stroke-width="0.4" opacity="0.55"/>
<line x1="1137.0" y1="282.1" x2="1137.0" y2="309.1" stroke="#33373a" stroke-width="0.4" opacity="0.55"/>
<line x1="1144.0" y1="283.1" x2="1144.0" y2="310.5" stroke="#33373a" stroke-width="0.4" opacity="0.55"/>
<line x1="1151.0" y1="284.0" x2="1151.0" y2="311.9" stroke="#33373a" stroke-width="0.4" opacity="0.55"/>
<line x1="1158.0" y1="284.9" x2="1158.0" y2="313.4" stroke="#33373a" stroke-width="0.4" opacity="0.55"/>
<line x1="1165.0" y1="285.8" x2="1165.0" y2="314.8" stroke="#33373a" stroke-width="0.4" opacity="0.55"/>
<line x1="1172.0" y1="286.7" x2="1172.0" y2="316.2" stroke="#33373a" stroke-width="0.4" opacity="0.55"/>
<line x1="1179.0" y1="287.7" x2="1179.0" y2="317.6" stroke="#33373a" stroke-width="0.4" opacity="0.55"/>
<line x1="1186.0" y1="288.6" x2="1186.0" y2="319.0" stroke="#33373a" stroke-width="0.4" opacity="0.55"/>
<line x1="1193.0" y1="289.5" x2="1193.0" y2="320.5" stroke="#33373a" stroke-width="0.4" opacity="0.55"/>
<line x1="1200.0" y1="290.4" x2="1200.0" y2="321.9" stroke="#33373a" stroke-width="0.4" opacity="0.55"/>
<line x1="1207.0" y1="291.3" x2="1207.0" y2="323.3" stroke="#33373a" stroke-width="0.4" opacity="0.55"/>
<polygon points="1218.4,300.5 1219.2,299.9 1222.6,300.1 1223.4,300.8 1223.4,304.6 1222.6,305.2 1219.2,304.9 1218.4,304.2" fill="#0d0d0d"/>
<polygon points="1236.9,303.2 1237.7,302.6 1241.5,302.8 1242.3,303.5 1242.3,307.6 1241.5,308.2 1237.7,307.9 1236.9,307.2" fill="#0d0d0d"/>
<polygon points="1271.0,308.1 1271.8,307.5 1276.2,307.7 1277.0,308.4 1277.0,313.1 1276.2,313.7 1271.8,313.4 1271.0,312.7" fill="#0d0d0d"/>
<polygon points="1334.9,317.4 1335.7,316.8 1341.1,317.0 1341.9,317.7 1341.9,323.5 1341.1,324.1 1335.7,323.8 1334.9,323.1" fill="#0d0d0d"/>
<polygon points="1069.6,275.0 1071.5,270.5 1079.0,268.0 1097.5,268.6 1098.1,276.2 1080.0,279.2 1074.0,283.0 1069.6,281.0" fill="#626567"/>
<line x1="1080.0" y1="279.5" x2="1098.0" y2="276.3" stroke="#c8c8c8" stroke-width="0.8"/>
<line x1="1056.5" y1="183.6" x2="1356.0" y2="142.3" stroke="#6b3422" stroke-width="0.8"/>
<line x1="1056.5" y1="183.6" x2="1056.5" y2="293.7" stroke="#1b1b1b" stroke-width="0.6"/>
<line x1="1355.7" y1="310.2" x2="1355.7" y2="355.0" stroke="#151515" stroke-width="1.0"/>
<line x1="1314.0" y1="208.0" x2="1314.0" y2="216.5" stroke="#2030ff" stroke-width="0.9"/>
<line x1="1314.0" y1="216.8" x2="1309.0" y2="217.0" stroke="#e01010" stroke-width="0.9"/>
<line x1="1314.0" y1="216.8" x2="1321.0" y2="216.8" stroke="#10b010" stroke-width="0.9"/>
</svg>
<!-- ICONS: top bar -->
<svg style="left:7px;top:6px" width="48" height="15" viewBox="0 0 48 15">
 <g fill="#161616">
  <rect x="4" y="3.300" width="1.650" height="8.800"/>
  <rect x="15.900" y="5.400" width="1.700" height="6.700"/><rect x="15.900" y="3.300" width="1.700" height="1.200"/>
  <rect x="33.300" y="5.400" width="1.800" height="6.700"/>
  <rect x="37.200" y="3.400" width="7.600" height="1.650"/><rect x="40.100" y="3.400" width="1.850" height="8.700"/>
 </g>
 <g fill="none" stroke="#161616" stroke-width="1.650">
  <path d="M6.600 4.150H11.400Q13.500 4.150 13.500 5.900 13.500 7.600 11.700 7.700H8.600M11.700 7.700Q13.900 7.800 13.900 9.600 13.900 11.300 11.500 11.300H6.600"/>
  <path d="M20.300 12.100V4.300L25.300 11.300 30.300 4.300V12.100" stroke-linejoin="bevel"/>
 </g>
 <rect x="32.800" y="3.050" width="2.400" height="1.800" fill="#f5000f"/>
</svg>
<svg style="left:0;top:0" width="460" height="30" viewBox="0 0 460 30" fill="none" stroke="#e6e6e6" stroke-linejoin="round">
 <g stroke-width="2.100"><rect x="353.100" y="9.300" width="17.700" height="11.700" rx="1.600"/><path d="M359.300 9.300V6.600q0-1.300 1.300-1.300h3q1.300 0 1.300 1.300v2.700"/><path d="M353.100 13.700h17.700" stroke-width="1.900"/><rect x="360" y="13.900" width="3.700" height="2.700" fill="#e6e6e6" stroke="none"/></g>
 <g stroke-width="2"><circle cx="395.800" cy="8.700" r="2.100"/><path d="M390.900 21.100C391.200 16.600 392.700 14.300 395.900 14.300C399.100 14.300 400.600 16.600 400.900 21.100Z" stroke-width="2.100"/></g>
 <g fill="#e6e6e6" stroke="none"><circle cx="387.900" cy="13.100" r="2.100"/><circle cx="403.900" cy="13.100" r="2.100"/><path d="M383.800 22.100q.3-5 3-5.800h2.300l-1.300 5.800zM408.100 22.100q-.3-5-3-5.800h-2.300l1.300 5.800z"/></g>
 <g stroke-width="2.100"><path d="M429.400 22q-.5.300-1.100.5-5.900-3.300-5.900-9.300V8.800l6.100-2.600 6.100 2.600v3.800"/><circle cx="435.100" cy="18.800" r="4.900" stroke-width="2.200"/><circle cx="435.100" cy="17.400" r="1.200" fill="#e6e6e6" stroke="none"/><path d="M432.900 21.100q.3-1.300 2.200-1.300t2.200 1.300z" fill="#e6e6e6" stroke="none"/></g>
</svg>
<svg style="left:630.500px;top:11.300px" width="11" height="5.500" viewBox="0 0 11 5.500"><path d="M0 0h11L5.500 5.500z" fill="#fff"/></svg>
<svg style="left:1088.700px;top:2px" width="24" height="24" viewBox="0 0 24 24" fill="#e6e6e6"><path d="M12,8A4,4 0 0,1 16,12A4,4 0 0,1 12,16A4,4 0 0,1 8,12A4,4 0 0,1 12,8M12,10A2,2 0 0,0 10,12A2,2 0 0,0 12,14A2,2 0 0,0 14,12A2,2 0 0,0 12,10M10,22C9.750,22 9.540,21.820 9.500,21.580L9.130,18.930C8.500,18.680 7.960,18.340 7.440,17.940L4.950,18.950C4.730,19.030 4.460,18.950 4.340,18.730L2.340,15.270C2.210,15.050 2.270,14.780 2.460,14.630L4.570,12.970L4.500,12L4.570,11L2.460,9.370C2.270,9.220 2.210,8.950 2.340,8.730L4.340,5.270C4.460,5.050 4.730,4.960 4.950,5.050L7.440,6.050C7.960,5.660 8.500,5.320 9.130,5.070L9.500,2.420C9.540,2.180 9.750,2 10,2H14C14.250,2 14.460,2.180 14.500,2.420L14.870,5.070C15.500,5.320 16.040,5.660 16.560,6.050L19.050,5.050C19.270,4.960 19.540,5.050 19.660,5.270L21.660,8.730C21.790,8.950 21.730,9.220 21.540,9.370L19.430,11L19.500,12L19.430,13L21.540,14.630C21.730,14.780 21.790,15.050 21.660,15.270L19.660,18.730C19.540,18.950 19.270,19.040 19.050,18.950L16.560,17.950C16.040,18.340 15.500,18.680 14.870,18.930L14.500,21.580C14.460,21.820 14.250,22 14,22H10M11.250,4L10.880,6.610C9.680,6.860 8.620,7.500 7.850,8.390L5.440,7.350L4.690,8.650L6.800,10.200C6.400,11.370 6.400,12.640 6.800,13.800L4.680,15.360L5.430,16.660L7.860,15.620C8.630,16.500 9.680,17.140 10.870,17.380L11.240,20H12.760L13.130,17.390C14.320,17.140 15.370,16.500 16.140,15.620L18.570,16.660L19.320,15.360L17.200,13.810C17.600,12.640 17.600,11.370 17.200,10.200L19.310,8.650L18.560,7.350L16.150,8.390C15.380,7.500 14.320,6.860 13.120,6.620L12.750,4H11.250Z"/></svg>
<svg style="left:1124px;top:2.400px" width="24.700" height="24.700" viewBox="0 0 24 24" fill="#e6e6e6"><path d="M14,5V9C7,10 4,15 3,20C5.500,16.500 9,14.900 14,14.900V19L21,12L14,5M16,9.830L18.170,12L16,14.170V12.900H14C11.930,12.900 10.070,13.280 8.340,13.850C9.740,12.460 11.540,11.370 14.280,11L16,10.730V9.830Z"/></svg>
<svg style="left:1661.400px;top:1.600px" width="25" height="25" viewBox="0 0 24 24" fill="#e6e6e6"><path d="M15.500 14h-.79l-.28-.27A6.471 6.471 0 0 0 16 9.500 6.500 6.500 0 1 0 9.500 16c1.610 0 3.090-.590 4.230-1.570l.27.280v.790l5 4.990L20.490 19l-4.990-5zm-6 0C7.010 14 5 11.990 5 9.500S7.010 5 9.500 5 14 7.010 14 9.500 11.990 14 9.500 14z"/></svg>
<svg style="left:1730px;top:1px" width="25" height="25" viewBox="0 0 24 24" fill="#e6e6e6"><path d="M4 10.500c-.83 0-1.500.67-1.500 1.500s.67 1.500 1.500 1.500 1.500-.67 1.500-1.500-.67-1.500-1.500-1.500zm0-6c-.83 0-1.500.67-1.500 1.500S3.170 7.500 4 7.500 5.500 6.830 5.500 6 4.830 4.500 4 4.500zm0 12c-.83 0-1.500.68-1.500 1.500s.68 1.500 1.500 1.500 1.500-.68 1.500-1.500-.67-1.500-1.500-1.500zM7 19h14v-2H7v2zm0-6h14v-2H7v2zm0-8v2h14V5H7z"/></svg>
<svg style="left:1765px;top:4px" width="23" height="21" viewBox="0 0 23 21"><path d="M17.800 9.700A8 8 0 1 0 14.400 16.300" fill="none" stroke="#e6e6e6" stroke-width="1.800"/><path d="M14.300 9.300h6.600l-3.300 3.600z" fill="#e6e6e6"/><path d="M9.900 3.600c-.6 0-1 .4-1 1v.4C7.300 5.500 6.300 7 6.300 8.800v3l-1.200 1.200v.6h9.600V13l-1.200-1.200v-3c0-1.800-1-3.300-2.600-3.800v-.4c0-.6-.4-1-1-1zM8.700 14.200c0 .7.500 1.200 1.200 1.200s1.200-.5 1.200-1.200z" fill="#e6e6e6"/><circle cx="18.100" cy="17.100" r="3.900" fill="#d0000e"/></svg>
<svg style="left:1801px;top:5px" width="18" height="18" viewBox="0 0 18 18"><rect width="18" height="18" rx="2" fill="#e6e6e6"/><circle cx="9" cy="6.300" r="3" fill="#545454"/><path d="M3 14.800c0-2.700 4-3.600 6-3.600s6 .9 6 3.600V15H3z" fill="#545454"/></svg>
<!-- ICONS: left sidebar -->
<svg style="left:0;top:0" width="60" height="815" viewBox="0 0 60 815" fill="none" stroke="#e2e2e2" stroke-linecap="round" stroke-linejoin="round">
 <g stroke-width="2">
  <rect x="15.300" y="47.200" width="11.100" height="5.900" rx="2.950" fill="#e2e2e2" stroke="none"/>
  <path d="M26 50.100h3.200q1 0 1 1V74.200h4.600M30.200 54.100h4.600M30.200 64.100h4.600" stroke-linecap="butt"/>
  <rect x="38.200" y="51.800" width="8.700" height="4.400" rx="2.200" fill="#e2e2e2" stroke="none"/>
  <rect x="38.200" y="61.900" width="8.700" height="4.400" rx="2.200" fill="#e2e2e2" stroke="none"/>
  <rect x="38.200" y="72" width="8.700" height="4.400" rx="2.200" fill="#e2e2e2" stroke="none"/>
 </g>
 <g stroke-width="2"><path d="M26.100 104v14.600M26.100 104.500L35.800 115.200"/><circle cx="26.100" cy="104" r="3.200" fill="#e2e2e2" stroke="none"/><circle cx="26.100" cy="118.600" r="3.200" fill="#e2e2e2" stroke="none"/><circle cx="35.800" cy="115.200" r="3.200" fill="#e2e2e2" stroke="none"/></g>
 <g stroke-width="1.800" stroke="#ededed"><path d="M17.300 153.200c8 0 10 4 13.500 8.200s6 8 15 8.200M17.300 169.600c8 0 10-4 13.500-8.200s6-8 15-8.200"/><path d="M38.500 147.800l7.600 5.300-8 4.300M38.300 164.200l7.800 5.300-7.400 5.400"/></g>
 <path d="M38.200 200.900L22.700 201.800 33 211.200 22.100 220.500H38.200" stroke-width="2.800"/>
 <path d="M33.900 251.600L18.600 252.500 28.900 261.500 18 271.200H33.900" stroke-width="2.800"/>
 <path d="M36.300 262h8.200M40.400 257.900v8.200" stroke-width="1.600"/>
 <g stroke-width="1.600"><path d="M18 298q12.600-1.200 25.200-.4-.4 6-1.400 13.400t-1 13.900H18z"/><path d="M33 322.600l6.500-.6" stroke-width="2"/></g>
 <g stroke-width="1.500" stroke-linecap="butt"><rect x="27" y="346.800" width="7.800" height="9.700" rx="1"/><path d="M30.900 356.500v10.300M19.500 366.800v-4.700h22.800v4.700"/><rect x="15.600" y="366.800" width="8" height="9.600" rx="1"/><rect x="27" y="366.800" width="7.800" height="9.600" rx="1"/><rect x="38.500" y="366.800" width="7.900" height="9.600" rx="1"/></g>
 <g stroke-width="1.700"><path d="M19 404l5.600-4.600 7.400 6.500 11.600-9.300M19 412.400q2.500-2.400 4.500-1.300l5.700 5.400q3-2 5.600-3.100t8-1.900M19.400 423.600h23.400"/></g>
 <path d="M18.500 454.500Q18.500 452.500 20.500 452.500H26V451A3.500 3.500 0 1 1 33 451V452.500H38.500Q40.500 452.500 40.500 454.500V460H42A3.500 3.500 0 1 1 42 467H40.500V472.500Q40.500 474.500 38.500 474.500H33V473.500A3.500 3.500 0 1 0 26 473.500V474.500H20.500Q18.500 474.500 18.500 472.500V467H19.500A3.500 3.500 0 1 0 19.500 460H18.500Z" stroke-width="2"/>
 <g stroke-width="2"><circle cx="30.500" cy="504.600" r="5"/><path d="M29.800 520.700H18.600Q19.900 512 30.500 512 39.700 512 42.100 517.400"/><path d="M34.200 523.100l4.200 3.800 7.500-9.200" stroke-width="2.500"/></g>
 <g stroke-width="1.900"><path d="M19.900 571.900L15.400 553.600 25.300 552.400 28.500 555.800H36.700L39.200 563.300 45.900 564.800 42.100 571.900Z"/><path d="M39.700 565.200H28.500M32.200 561.500L28 565.200 32.200 569" stroke-width="1.800"/></g>
 <g stroke-width="2"><circle cx="26" cy="604.400" r="5"/><path d="M31 618.500H15.400Q16.100 611.100 26 611.100 32.200 611.100 34.700 613.500"/><path d="M39.700 625.200C36 621 34.300 618.500 34.300 615.500a5.400 5.400 0 0 1 10.800 0c0 3-1.700 5.500-5.400 9.700z" stroke-width="1.500"/><circle cx="39.700" cy="615.400" r="1.600" fill="#e2e2e2" stroke="none"/></g>
 <g stroke-width="2"><circle cx="30.500" cy="659.400" r="12.700"/><path d="M30.500 672.200v4M16.100 676.700h29.800" stroke-width="2"/><path d="M28.300 665.400L33.100 653.400 31.700 666Z" fill="#e2e2e2" stroke-width="1.200"/><path d="M21.800 662.500A9.300 9.300 0 1 1 39.200 662.500" stroke-width="1.100" stroke-dasharray="0.800 1.900" stroke-opacity=".75"/></g>
</svg>
<div class="t" style="left:18px;top:783.500px;width:24px;text-align:center;font-size:17px;font-weight:bold;color:#fff">?</div>
<!-- ICONS: main panel -->
<svg style="left:0;top:0" width="100" height="100" viewBox="0 0 100 100" fill="#e8e8e8"><rect x="74" y="59.300" width="13" height="1.600"/><rect x="74" y="63.100" width="13" height="1.600"/><rect x="74" y="67" width="9.100" height="1.600"/><path d="M84.800 67.300v5.700l4.900-2.850z"/></svg>
<svg style="left:0;top:0" width="940" height="815" viewBox="0 0 940 815">
 <path d="M899.600 59.700L913.500 72.500M913.500 59.700L899.600 72.500" stroke="#ececec" stroke-width="1.700" fill="none"/>
 <g fill="#e4e4e4"><path d="M468 103h10l-5 5.200z"/><path d="M904 103h10l-5 5.200z"/><path d="M904 430.200h10l-5 5.200z"/><path d="M904 620.200h10l-5 5.200z"/></g>
 <g fill="none" stroke="#3b94b4" stroke-width="1.400"><path d="M76 136.600l3-3 3 3M76 141.600l3 3 3-3"/></g>
 <g fill="#6e6e6e"><path d="M77.700 159.800h6.800l-3.400 3.400z"/><path d="M85.800 183.800h6.800l-3.400 3.400z"/></g>
 <path d="M79.500 229.700v6.200l3.500-3.100z" fill="#8c8c8c"/>
 <g fill="none" stroke="#3b94b4" stroke-width="1.350" stroke-linecap="round">
  <path d="M455.500 133.500l11 10.800M454.400 139.600l3.100 3.300M458.300 139.700l2.900 2.700 1.100-1.400M462.300 137.300l2.300-2M464.400 139.400l4-4"/>
  <g transform="translate(422.900 524.200)"><path d="M455.500 133.500l11 10.800M454.400 139.600l3.100 3.300M458.300 139.700l2.900 2.700 1.100-1.400M462.300 137.300l2.300-2M464.400 139.400l4-4"/></g>
 </g>
 <g fill="none" stroke="#fff" stroke-width="1.600"><path d="M463.100 161.100l3.200 2.900 5.300-5.900M463.100 185.100l3.200 2.900 5.300-5.900M463.100 209.100l3.200 2.900 5.300-5.900"/></g>
 <g fill="#0c0c0c"><circle cx="900.500" cy="139.700" r="2"/><circle cx="900.500" cy="145.900" r="2"/><circle cx="900.500" cy="151.900" r="2"/></g>
 <defs><filter id="ash" x="-20%" y="-20%" width="150%" height="150%"><feGaussianBlur stdDeviation="1.500"/></filter></defs>
 <g transform="translate(2.600 2.400)" filter="url(#ash)" opacity=".8"><path d="M542.100 152.700L556.600 159 552.100 162.200 635.300 256.700 633.100 258.500 549.700 164.300 545.800 167.500Z" fill="#555"/></g>
 <path d="M542.100 152.700L556.600 159 552.100 162.200 635.300 256.700 633.100 258.500 549.700 164.300 545.800 167.500Z" fill="#c0040a"/>
</svg>
<svg style="left:873px;top:94px" width="24" height="24" viewBox="0 0 24 24" fill="#dedede"><path d="M12,8A4,4 0 0,1 16,12A4,4 0 0,1 12,16A4,4 0 0,1 8,12A4,4 0 0,1 12,8M12,10A2,2 0 0,0 10,12A2,2 0 0,0 12,14A2,2 0 0,0 14,12A2,2 0 0,0 12,10M10,22C9.750,22 9.540,21.820 9.500,21.580L9.130,18.930C8.500,18.680 7.960,18.340 7.440,17.940L4.950,18.950C4.730,19.030 4.460,18.950 4.340,18.730L2.340,15.270C2.210,15.050 2.270,14.780 2.460,14.630L4.570,12.970L4.500,12L4.570,11L2.460,9.370C2.270,9.220 2.210,8.950 2.340,8.730L4.340,5.270C4.460,5.050 4.730,4.960 4.950,5.050L7.440,6.050C7.960,5.660 8.500,5.320 9.130,5.070L9.500,2.420C9.540,2.180 9.750,2 10,2H14C14.250,2 14.460,2.180 14.500,2.420L14.870,5.070C15.500,5.320 16.040,5.660 16.560,6.050L19.050,5.050C19.270,4.960 19.540,5.050 19.660,5.270L21.660,8.730C21.790,8.950 21.730,9.220 21.540,9.370L19.430,11L19.500,12L19.430,13L21.540,14.630C21.730,14.780 21.790,15.050 21.660,15.270L19.660,18.730C19.540,18.950 19.270,19.040 19.050,18.950L16.560,17.950C16.040,18.340 15.500,18.680 14.870,18.930L14.500,21.580C14.460,21.820 14.250,22 14,22H10M11.250,4L10.880,6.610C9.680,6.860 8.620,7.500 7.850,8.390L5.440,7.350L4.690,8.650L6.800,10.200C6.400,11.370 6.400,12.640 6.800,13.800L4.680,15.360L5.430,16.660L7.860,15.620C8.630,16.500 9.680,17.140 10.870,17.380L11.240,20H12.760L13.130,17.390C14.320,17.140 15.370,16.500 16.140,15.620L18.570,16.660L19.320,15.360L17.200,13.810C17.600,12.640 17.600,11.370 17.200,10.200L19.310,8.650L18.560,7.350L16.150,8.390C15.380,7.500 14.320,6.860 13.120,6.620L12.750,4H11.250Z"/></svg>
<!-- 2D label in sidebar icon -->
<div class="t" style="left:18.800px;top:306px;width:24px;text-align:center;font-size:10.500px;color:#e2e2e2;letter-spacing:.8px">2D</div>
<!-- VIEWPORT widgets -->
<svg style="left:0;top:0" width="1836" height="815" viewBox="0 0 1836 815">
 <g fill="none" stroke="#f0f0f0" stroke-width="1.400"><path d="M948.700 50v-7.300h7.300M964 42.700h7.300v7.300M971.300 58v7.300H964M956 65.300h-7.300V58"/></g>
 <path d="M960 47.100l6.100 3.400v6.800l-6.100 3.400-6.100-3.400v-6.800z" fill="#dedede"/>
 <circle cx="994" cy="296" r="46.600" fill="#302c2b"/>
 <path d="M994 295.500V276" stroke="#0000f0" stroke-width="2"/><path d="M994 268.800l2.700 8.500h-5.400z" fill="#0000f0"/>
 <path d="M997 296.300h14" stroke="#00e000" stroke-width="2"/><path d="M1020.400 296.300l-9.600 3.100v-6.200z" fill="#00e000"/>
 <path d="M991 296.300h-9" stroke="#f00000" stroke-width="1.800"/><path d="M975.800 296.300l3.900-3 4 3-4 3z" fill="#f00000"/>
 <circle cx="994" cy="296" r="4" fill="#a9a9a9"/><circle cx="993" cy="295" r="1.500" fill="#cfcfcf"/>
 <path d="M1684.600 85L1731.100 77.800V149.400L1684.600 140.300Z" fill="#fff"/>
 <path d="M1732.900 78.200L1757.500 87.900V138L1732.900 149.100Z" fill="#fff"/>
</svg>
<div class="t" style="left:994.300px;top:254.500px;font-size:10.500px;color:#1010ff;font-weight:bold;transform:scaleX(.85);transform-origin:0 0">Z</div>
<div class="t" style="left:1026.800px;top:287.500px;font-size:10.500px;color:#10f510;transform:scaleX(.9);transform-origin:0 0">Y</div>
<div class="t" style="left:968.500px;top:287.500px;font-size:10.500px;color:#ff1818;transform:scaleX(.9);transform-origin:0 0">X</div>
<div class="t" style="left:1692.500px;top:103.300px;font-size:20.500px;color:#848484;transform:scaleX(.392);transform-origin:0 0">Справа</div>
<div class="t" style="left:1739px;top:103px;font-size:20.500px;color:#8c8c8c;transform:skewY(5deg) scaleX(.255);transform-origin:0 50%">Сзади</div>
<!-- ICONS: bottom panel -->
<svg style="left:0;top:0" width="1000" height="500" viewBox="0 0 1000 500" fill="#e8e8e8"><rect x="957.800" y="440.400" width="13.300" height="1.900"/><rect x="957.800" y="444.600" width="13.300" height="1.900"/><rect x="957.800" y="448.800" width="9.400" height="1.900"/><path d="M968.600 448.300v5.200l5.100-2.600z"/></svg>
<svg style="left:1721.400px;top:436.500px" width="21.300" height="21.300" viewBox="0 0 24 24" fill="#e6e6e6"><path d="M19.140 12.940c.040-.300.060-.610.060-.940 0-.320-.020-.640-.070-.940l2.030-1.580c.180-.140.230-.410.120-.610l-1.920-3.320c-.120-.220-.370-.290-.590-.220l-2.390.960c-.500-.380-1.030-.700-1.620-.940l-.360-2.540c-.040-.240-.240-.410-.480-.410h-3.840c-.240 0-.430.170-.470.410l-.360 2.540c-.590.240-1.130.570-1.620.940l-2.390-.960c-.220-.080-.470 0-.590.220L2.740 8.870c-.120.210-.080.470.120.610l2.030 1.580c-.050.300-.090.630-.090.940s.020.640.070.940l-2.030 1.580c-.180.140-.230.410-.120.610l1.920 3.320c.120.220.370.290.590.220l2.390-.960c.500.380 1.030.700 1.620.940l.360 2.540c.050.240.240.410.480.410h3.840c.240 0 .440-.170.470-.410l.360-2.540c.590-.240 1.130-.560 1.620-.940l2.390.960c.220.080.470 0 .590-.220l1.920-3.320c.120-.220.070-.470-.120-.610l-2.010-1.580zM12 15.600c-1.980 0-3.600-1.620-3.600-3.600s1.620-3.600 3.600-3.600 3.600 1.620 3.600 3.600-1.620 3.600-3.600 3.600z"/></svg>
<svg style="left:0;top:0" width="1836" height="815" viewBox="0 0 1836 815" fill="none" stroke="#e6e6e6">
 <g stroke-width="1.600"><path d="M1631.600 442.500v-2.400q0-2.200-2.200-2.200h-6.300q-2.200 0-2.200 2.200v6.300q0 2.200 2.200 2.200h2.700"/><rect x="1625.800" y="443.300" width="10.900" height="10.400" rx="2.200"/></g>
 <g stroke-width="1.700"><path d="M1657.100 439.900h13.900M1657.100 454.700h13.900"/><path d="M1664 442.900v9.300M1661.500 445.400l2.500-2.600 2.500 2.600M1661.500 449.700l2.500 2.600 2.500-2.600" stroke-width="1.500"/></g>
 <g stroke-width="1.500"><path d="M1691.200 445.900h13.700M1691.200 448.200h13.700"/><path d="M1697.900 438.100v5.300M1695.500 441.200l2.400 2.500 2.500-2.500M1697.900 455.900v-5M1695.500 453.300l2.400-2.600 2.500 2.600"/></g>
 <path d="M1761 445.200l4.900 4.900 4.900-4.900" stroke-width="2"/>
</svg>
<!-- ICONS: right toolbar -->
<svg style="left:0;top:0" width="1836" height="815" viewBox="0 0 1836 815" fill="none" stroke="#e4e4e4" stroke-linejoin="round">
 <g stroke-width="1.500"><path d="M1813 67.500h-2.800a5.500 5.500 0 0 1-1.500-10.800 7.900 7.900 0 0 1 15.500-1.400 5.700 5.700 0 0 1-.8 12.200h-2.800"/><path d="M1816.600 56.800v16.100M1812.300 60l4.300 4.300M1821.400 61.800l-4.800 4.200"/></g>
 <g stroke-width="1.300"><path d="M1826.600 100.200v-6.700h-23.400v17.300h8.300M1808 113.600h3.500v-2.800"/><path d="M1813.900 106.500v-3.800h4M1824 102.700h4v3.800M1828 114v3.800h-4M1817.900 117.800h-4V114"/><path d="M1820.900 105.900l4.200 2.400v4.800l-4.200 2.400-4.200-2.400v-4.800z" fill="#dedede" stroke="none"/></g>
 <g stroke-width="1.300"><rect x="1803.500" y="149.800" width="25" height="8.800"/><path d="M1802.900 161.300h26.100" stroke-width="1.900"/><path d="M1806.500 158v-3M1809.300 158v-1.800M1812.100 158v-3M1814.900 158v-1.800M1817.700 158v-3.800M1820.500 158v-1.800M1823.300 158v-3M1826.100 158v-1.800" stroke-width="1"/></g>
 <g stroke-width="1.200"><path d="M1803.200 201.800l10-6.600h15.800l-9.800 6.600z"/><path d="M1811.500 192.300l9.900-6.900v18.900l-9.900 8.100z" fill="#dedede" stroke="none"/></g>
 <g stroke-width="1.100"><rect x="1804.600" y="237.800" width="14.600" height="14.600"/><rect x="1812.300" y="232.700" width="15.500" height="14.500"/><path d="M1804.600 237.800l7.700-5.100M1819.200 237.800l8.600-5.100M1819.200 252.400l8.600-5.200M1804.600 252.400l7.700-5.200"/><path d="M1813.200 236.100l5.100-2.600v15.500l-5.100 2.900z" fill="#dedede" stroke="none"/></g>
 <g stroke-width="1.200"><path d="M1802.700 279.800l3.400-3.100h21.400v18.600h-24.800z"/><path d="M1802.700 279.800l3.400-3.100v3.100z" fill="#e4e4e4" stroke-width=".6"/><path d="M1828.900 278.200v18.800h-24.700" stroke-width="2.100" stroke-linejoin="miter"/><path d="M1814.400 277.500v17.500" stroke-dasharray="2.200 1.300" stroke-width="1.200"/><path d="M1803.500 285.400h23.500" stroke-dasharray="2.600 1.300" stroke-width="1.200"/><path d="M1820.300 294.800v-3.500h6.800" stroke-width="1.100"/></g>
 <g><circle cx="1816.100" cy="330.900" r="7.300" stroke-width="2.200"/><circle cx="1816.100" cy="330.900" r="3.700" fill="#e4e4e4" stroke="none"/><path d="M1816.100 319.800v3M1816.100 339v3M1805 330.900h3M1824.200 330.900h3" stroke-width="1.800"/></g>
 <g stroke-width="1.200"><circle cx="1816.100" cy="374.700" r="12.700"/><path d="M1810.600 381.600v-12.900q2.400-1 4.400-.5c1.600.4 2.600 2 4.200 2.300q2 .3 4.300-1v7q-2.300 1.200-4.300.8c-1.600-.3-2.600-1.900-4.200-2.300q-2-.5-4.400.5" stroke-width="1.300"/></g>
 <g stroke-width="1"><path d="M1801.200 427.900l30-17.200M1802 437.300l29.200-15.900M1802.500 422.400l18.400 10.600M1810.600 415.900l18.900 10.300"/></g>
 <g stroke-width="1.100" stroke-dasharray="2.100 1.900" stroke="#f2f2f2"><rect x="1804.300" y="461.300" width="23.600" height="23.200"/><rect x="1804.300" y="505.400" width="23.600" height="23.200"/><rect x="1804.300" y="549.300" width="23.600" height="23.200"/><path d="M1813.500 616.300h-9.400v-23.100h23.400v9.500"/></g>
 <g stroke-width="1.200"><path d="M1816.100 466.400l5.800 3.300v6.600l-5.800 3.300-5.800-3.300v-6.600z"/><path d="M1810.300 469.700l5.800 3.300 5.800-3.300M1816.100 473v6.600"/></g>
 <path d="M1816.100 512c-3.200 0-5.900 2-7 4.900 1.100 2.900 3.800 4.900 7 4.900s5.900-2 7-4.900c-1.100-2.900-3.800-4.900-7-4.900z" fill="#e4e4e4" stroke="none"/><circle cx="1816.100" cy="516.900" r="2.900" fill="#545454" stroke="none"/><circle cx="1816.100" cy="516.900" r="1.600" fill="#e4e4e4" stroke="none"/>
 <path d="M1816.100 555.800c-3.200 0-5.900 2-7 4.900 1.100 2.900 3.800 4.900 7 4.900s5.900-2 7-4.900c-1.100-2.900-3.800-4.900-7-4.900z" fill="#e4e4e4" stroke="none"/><circle cx="1816.100" cy="560.700" r="2.900" fill="#545454" stroke="none"/><circle cx="1816.100" cy="560.700" r="1.500" fill="#e4e4e4" stroke="none"/>
 <path d="M1809.600 554.200l12.800 13" stroke="#545454" stroke-width="3.200"/><path d="M1809.900 554.500l12.500 12.700" stroke-width="1.300"/>
 <rect x="1813.900" y="603.100" width="16.100" height="15.800" fill="#dcdcdc" stroke="none"/><path d="M1818 607l7.900 7.900M1825.900 607l-7.900 7.900" stroke="#3c3c3c" stroke-width="1.200"/>
 <g stroke="none"><path d="M1804.700 644l12.100-2.900 10.900 2.900-11.500 3.800z" fill="#7c7c7c" stroke="#f4f4f4" stroke-width="1"/><path d="M1804.700 644l11.500 3.800v18.100l-10.100-5.200z" fill="#f4f4f4"/><path d="M1816.200 647.800l11.500-3.800-1.400 16.700-10.100 5.200z" fill="#cfcfcf"/></g>
 <g stroke-width="1.700" stroke="#f4f4f4"><ellipse cx="1816.200" cy="697.600" rx="11.300" ry="5.300"/><ellipse cx="1816.200" cy="697.600" rx="5.500" ry="11.300"/><path d="M1816.200 694v3.600l-2.600 2.800M1816.200 697.600l2.600 2.800" stroke-width="1.100"/></g>
 <path d="M1800 805.400v3.900h3.900z" fill="#f0f0f0" stroke="none"/>
</svg>
<div class="t" style="left:1801px;top:415.300px;font-size:5.800px;font-weight:bold;color:#e4e4e4">1</div>
<div class="t" style="left:1810.800px;top:408.500px;font-size:5.800px;font-weight:bold;color:#e4e4e4">2</div>
</body>
</html>
